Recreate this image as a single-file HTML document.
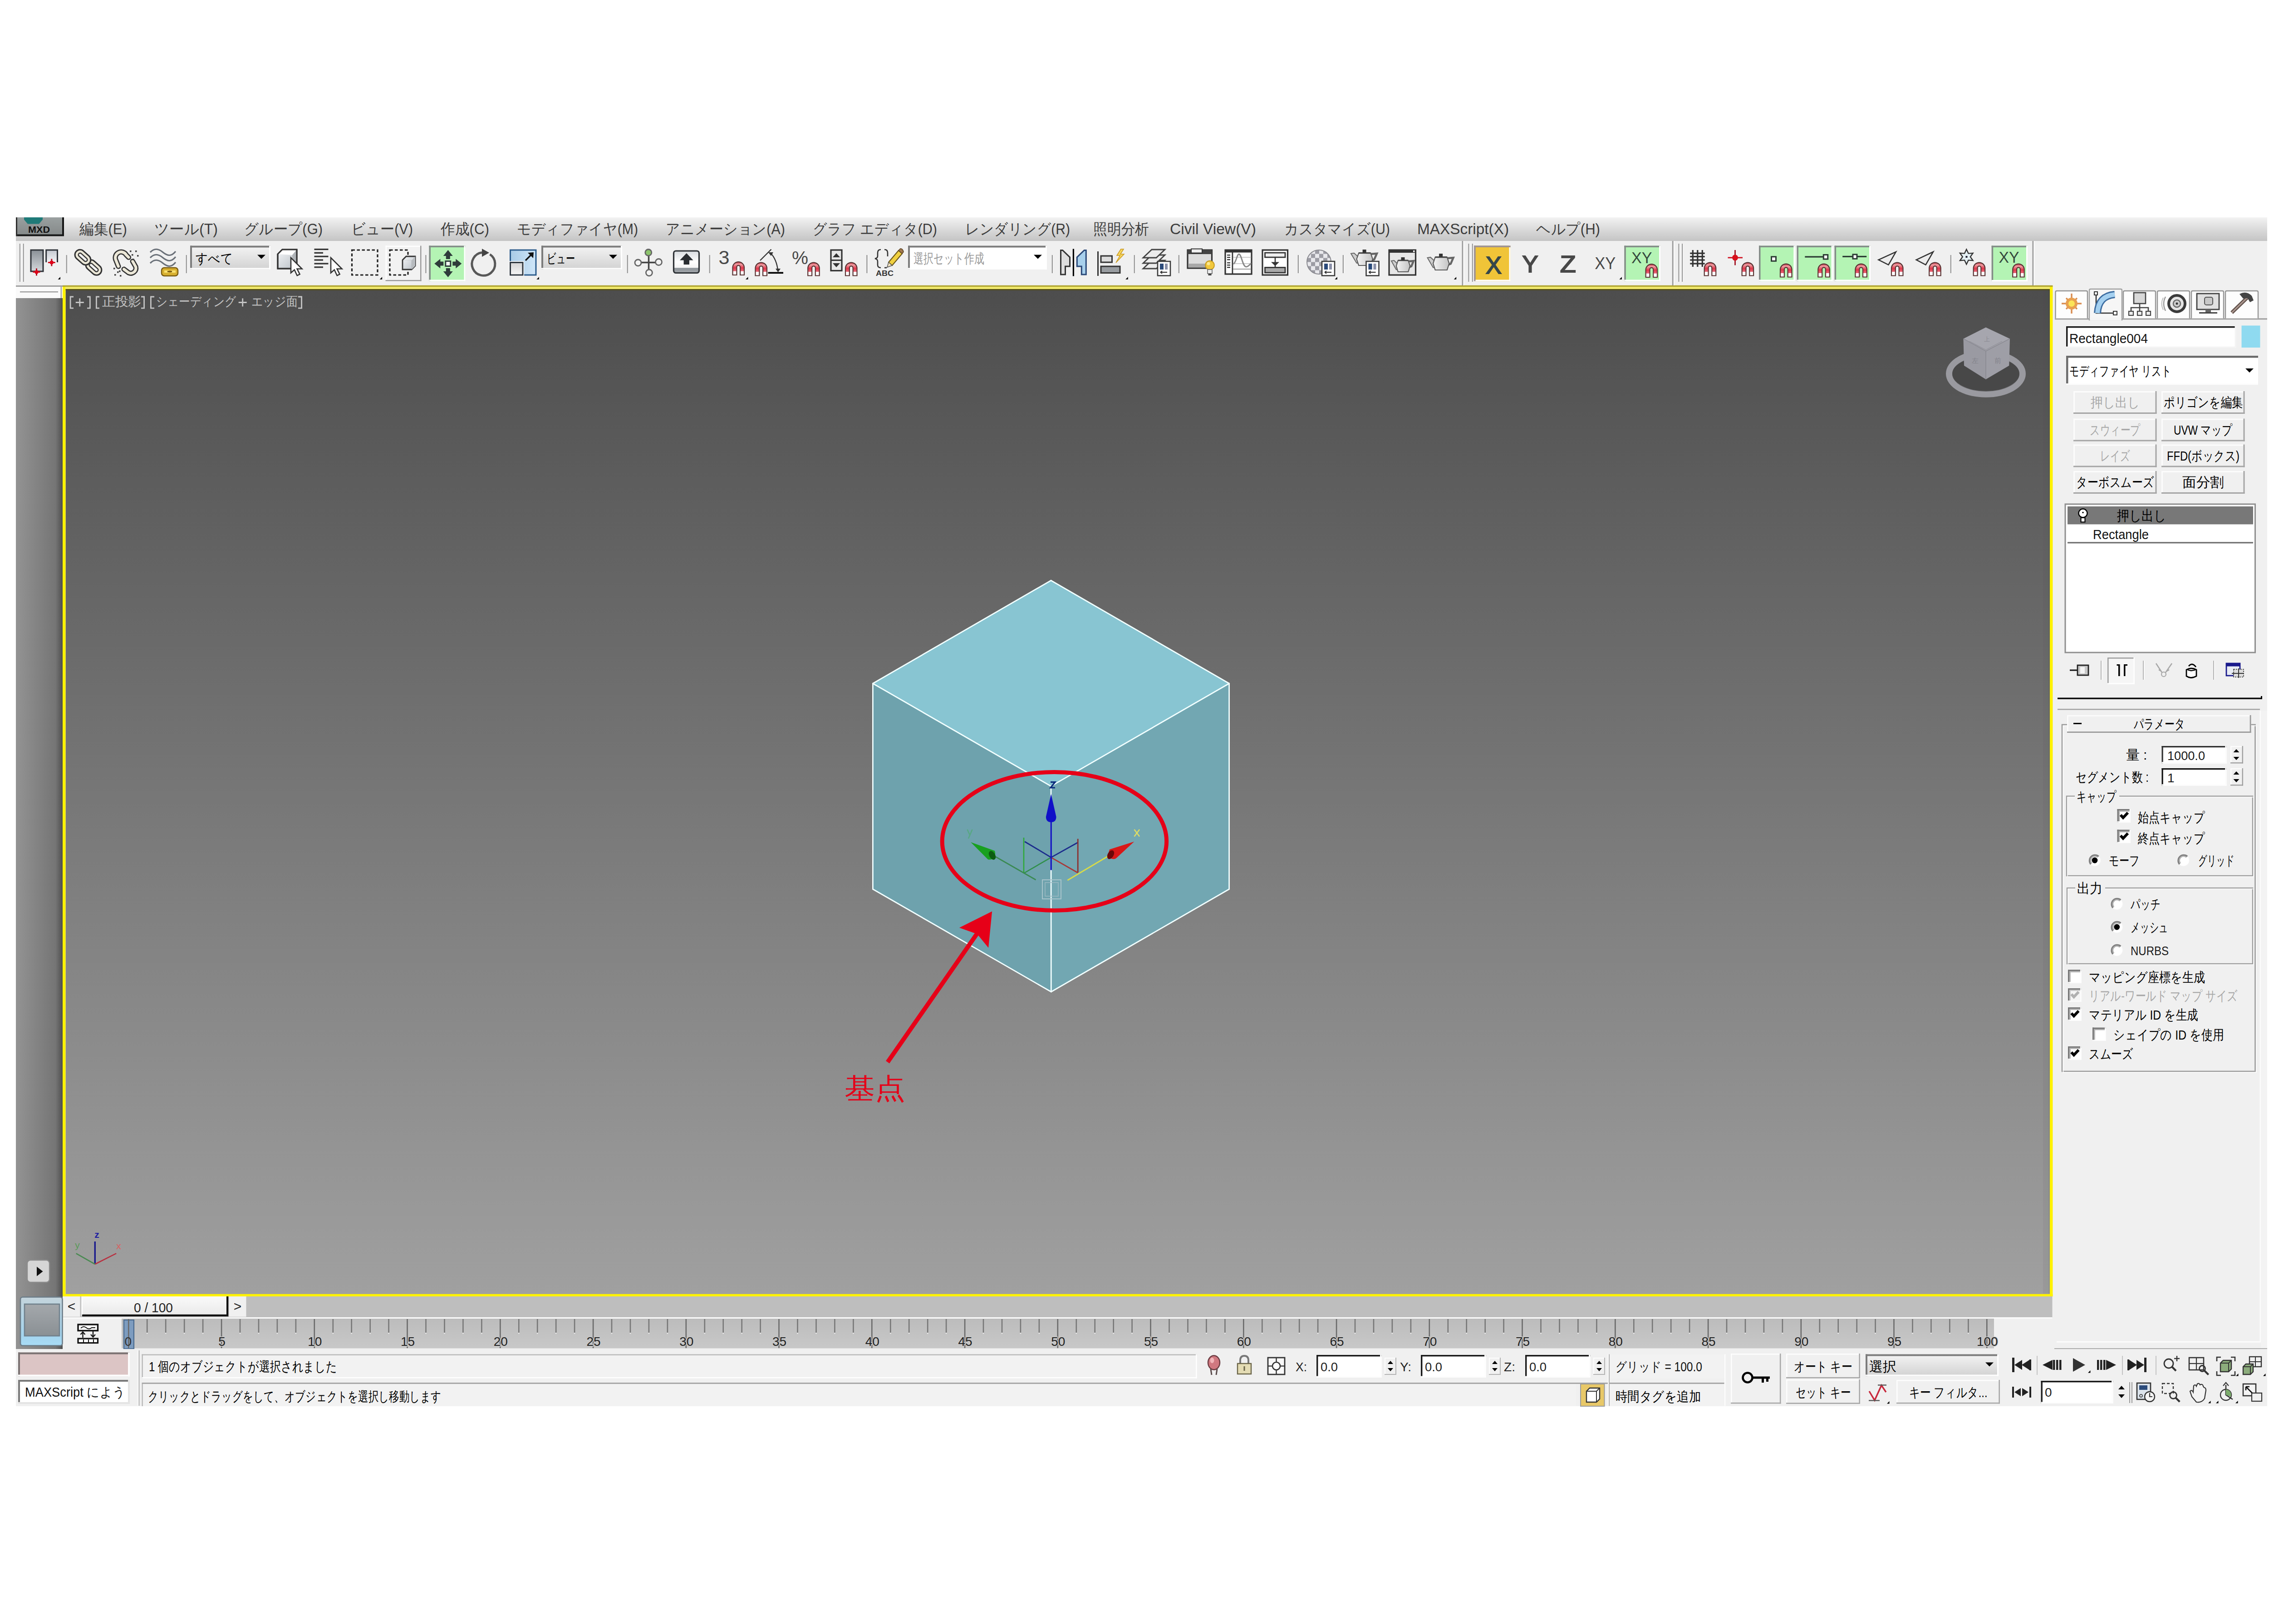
<!DOCTYPE html>
<html><head><meta charset="utf-8"><title>3ds Max</title>
<style>html,body{margin:0;padding:0;background:#fff;}body{width:5031px;height:3579px;overflow:hidden;font-family:"Liberation Sans",sans-serif;}svg{display:block;}</style></head>
<body>
<svg width="5031" height="3579" viewBox="0 0 5031 3579">
<defs>
<linearGradient id="gMenu" x1="0" y1="0" x2="0" y2="1"><stop offset="0" stop-color="#f3f3f3"/><stop offset="0.25" stop-color="#e6e6e6"/><stop offset="1" stop-color="#c4c4c4"/></linearGradient>
<linearGradient id="gView" x1="0" y1="0" x2="0" y2="1"><stop offset="0" stop-color="#4d4d4d"/><stop offset="1" stop-color="#a0a0a0"/></linearGradient>
<linearGradient id="gLeft" x1="0" y1="0" x2="1" y2="0"><stop offset="0" stop-color="#939393"/><stop offset="0.85" stop-color="#757575"/><stop offset="0.95" stop-color="#5c5c5c"/><stop offset="1" stop-color="#4e4e4e"/></linearGradient>
<linearGradient id="gDrop" x1="0" y1="0" x2="0" y2="1"><stop offset="0" stop-color="#f4f4f4"/><stop offset="1" stop-color="#d2d2d2"/></linearGradient>
<linearGradient id="gMxd" x1="0" y1="0" x2="0" y2="1"><stop offset="0" stop-color="#9aa0a0"/><stop offset="1" stop-color="#848888"/></linearGradient>
<linearGradient id="gI1" x1="0" y1="0" x2="0" y2="1"><stop offset="0" stop-color="#8a9096"/><stop offset="1" stop-color="#d4d8dc"/></linearGradient>
<linearGradient id="gI1b" x1="0" y1="0" x2="0" y2="1"><stop offset="0" stop-color="#c4c8d0"/><stop offset="1" stop-color="#f4f4f6"/></linearGradient>
<linearGradient id="gCube" x1="0" y1="0" x2="1" y2="1"><stop offset="0" stop-color="#f4f6f8"/><stop offset="1" stop-color="#b8bec4"/></linearGradient>
<linearGradient id="gSc" x1="0" y1="0" x2="1" y2="0"><stop offset="0" stop-color="#a8cbe6"/><stop offset="1" stop-color="#cfe6f8"/></linearGradient>
<linearGradient id="gSc2" x1="0" y1="0" x2="0" y2="1"><stop offset="0" stop-color="#d4d4d4"/><stop offset="1" stop-color="#f6f6f6"/></linearGradient>
<linearGradient id="gKb" x1="0" y1="0" x2="0" y2="1"><stop offset="0" stop-color="#d8dce0"/><stop offset="0.5" stop-color="#ffffff"/><stop offset="0.76" stop-color="#f4f4f4"/><stop offset="0.78" stop-color="#8c9298"/><stop offset="1" stop-color="#a4a8ac"/></linearGradient>
<linearGradient id="gm11" x1="0" y1="0" x2="0" y2="1"><stop offset="0" stop-color="#c8283c"/><stop offset="0.18" stop-color="#f0a0a4"/><stop offset="0.45" stop-color="#e0384c"/><stop offset="0.70" stop-color="#e86878"/><stop offset="0.72" stop-color="#ffffff"/><stop offset="1" stop-color="#ffffff"/></linearGradient>
<linearGradient id="gm12" x1="0" y1="0" x2="0" y2="1"><stop offset="0" stop-color="#c8283c"/><stop offset="0.18" stop-color="#f0a0a4"/><stop offset="0.45" stop-color="#e0384c"/><stop offset="0.70" stop-color="#e86878"/><stop offset="0.72" stop-color="#ffffff"/><stop offset="1" stop-color="#ffffff"/></linearGradient>
<linearGradient id="gm13" x1="0" y1="0" x2="0" y2="1"><stop offset="0" stop-color="#c8283c"/><stop offset="0.18" stop-color="#f0a0a4"/><stop offset="0.45" stop-color="#e0384c"/><stop offset="0.70" stop-color="#e86878"/><stop offset="0.72" stop-color="#ffffff"/><stop offset="1" stop-color="#ffffff"/></linearGradient>
<linearGradient id="gm14" x1="0" y1="0" x2="0" y2="1"><stop offset="0" stop-color="#c8283c"/><stop offset="0.18" stop-color="#f0a0a4"/><stop offset="0.45" stop-color="#e0384c"/><stop offset="0.70" stop-color="#e86878"/><stop offset="0.72" stop-color="#ffffff"/><stop offset="1" stop-color="#ffffff"/></linearGradient>
<pattern id="chk" x="2880" y="550.5" width="18" height="18" patternUnits="userSpaceOnUse"><rect width="18" height="18" fill="#e8e8ec"/><rect width="9" height="9" fill="#9c9ca4"/><rect x="9" y="9" width="9" height="9" fill="#9c9ca4"/></pattern>
<linearGradient id="gt16" x1="0" y1="0" x2="1" y2="0"><stop offset="0" stop-color="#f4f4f4"/><stop offset="1" stop-color="#c4c4c4"/></linearGradient>
<linearGradient id="gt17" x1="0" y1="0" x2="1" y2="0"><stop offset="0" stop-color="#f4f4f4"/><stop offset="1" stop-color="#c4c4c4"/></linearGradient>
<linearGradient id="gt18" x1="0" y1="0" x2="1" y2="0"><stop offset="0" stop-color="#f4f4f4"/><stop offset="1" stop-color="#c4c4c4"/></linearGradient>
<linearGradient id="gm19" x1="0" y1="0" x2="0" y2="1"><stop offset="0" stop-color="#c8283c"/><stop offset="0.18" stop-color="#f0a0a4"/><stop offset="0.45" stop-color="#e0384c"/><stop offset="0.70" stop-color="#e86878"/><stop offset="0.72" stop-color="#ffffff"/><stop offset="1" stop-color="#ffffff"/></linearGradient>
<linearGradient id="gm20" x1="0" y1="0" x2="0" y2="1"><stop offset="0" stop-color="#c8283c"/><stop offset="0.18" stop-color="#f0a0a4"/><stop offset="0.45" stop-color="#e0384c"/><stop offset="0.70" stop-color="#e86878"/><stop offset="0.72" stop-color="#ffffff"/><stop offset="1" stop-color="#ffffff"/></linearGradient>
<linearGradient id="gm21" x1="0" y1="0" x2="0" y2="1"><stop offset="0" stop-color="#c8283c"/><stop offset="0.18" stop-color="#f0a0a4"/><stop offset="0.45" stop-color="#e0384c"/><stop offset="0.70" stop-color="#e86878"/><stop offset="0.72" stop-color="#ffffff"/><stop offset="1" stop-color="#ffffff"/></linearGradient>
<linearGradient id="gm22" x1="0" y1="0" x2="0" y2="1"><stop offset="0" stop-color="#c8283c"/><stop offset="0.18" stop-color="#f0a0a4"/><stop offset="0.45" stop-color="#e0384c"/><stop offset="0.70" stop-color="#e86878"/><stop offset="0.72" stop-color="#ffffff"/><stop offset="1" stop-color="#ffffff"/></linearGradient>
<linearGradient id="gm23" x1="0" y1="0" x2="0" y2="1"><stop offset="0" stop-color="#c8283c"/><stop offset="0.18" stop-color="#f0a0a4"/><stop offset="0.45" stop-color="#e0384c"/><stop offset="0.70" stop-color="#e86878"/><stop offset="0.72" stop-color="#ffffff"/><stop offset="1" stop-color="#ffffff"/></linearGradient>
<linearGradient id="gm24" x1="0" y1="0" x2="0" y2="1"><stop offset="0" stop-color="#c8283c"/><stop offset="0.18" stop-color="#f0a0a4"/><stop offset="0.45" stop-color="#e0384c"/><stop offset="0.70" stop-color="#e86878"/><stop offset="0.72" stop-color="#ffffff"/><stop offset="1" stop-color="#ffffff"/></linearGradient>
<linearGradient id="gm25" x1="0" y1="0" x2="0" y2="1"><stop offset="0" stop-color="#c8283c"/><stop offset="0.18" stop-color="#f0a0a4"/><stop offset="0.45" stop-color="#e0384c"/><stop offset="0.70" stop-color="#e86878"/><stop offset="0.72" stop-color="#ffffff"/><stop offset="1" stop-color="#ffffff"/></linearGradient>
<linearGradient id="gm26" x1="0" y1="0" x2="0" y2="1"><stop offset="0" stop-color="#c8283c"/><stop offset="0.18" stop-color="#f0a0a4"/><stop offset="0.45" stop-color="#e0384c"/><stop offset="0.70" stop-color="#e86878"/><stop offset="0.72" stop-color="#ffffff"/><stop offset="1" stop-color="#ffffff"/></linearGradient>
<linearGradient id="gm27" x1="0" y1="0" x2="0" y2="1"><stop offset="0" stop-color="#c8283c"/><stop offset="0.18" stop-color="#f0a0a4"/><stop offset="0.45" stop-color="#e0384c"/><stop offset="0.70" stop-color="#e86878"/><stop offset="0.72" stop-color="#ffffff"/><stop offset="1" stop-color="#ffffff"/></linearGradient>
<linearGradient id="gm28" x1="0" y1="0" x2="0" y2="1"><stop offset="0" stop-color="#c8283c"/><stop offset="0.18" stop-color="#f0a0a4"/><stop offset="0.45" stop-color="#e0384c"/><stop offset="0.70" stop-color="#e86878"/><stop offset="0.72" stop-color="#ffffff"/><stop offset="1" stop-color="#ffffff"/></linearGradient>
<linearGradient id="gThumb" x1="0" y1="0" x2="0" y2="1"><stop offset="0" stop-color="#fafafa"/><stop offset="1" stop-color="#e8e8e8"/></linearGradient>
<linearGradient id="gTrack" x1="0" y1="0" x2="0" y2="1"><stop offset="0" stop-color="#bcbcbc"/><stop offset="1" stop-color="#c8c8c8"/></linearGradient>
<linearGradient id="gBlue" x1="0" y1="0" x2="0" y2="1"><stop offset="0" stop-color="#c4d4dc"/><stop offset="0.78" stop-color="#a4d4ee"/><stop offset="1" stop-color="#a8dcf6"/></linearGradient>
<linearGradient id="gInner" x1="0" y1="0" x2="0" y2="1"><stop offset="0" stop-color="#a4a8ac"/><stop offset="1" stop-color="#8a9094"/></linearGradient>
</defs>
<rect x="35.0" y="479.0" width="4961.0" height="2620.0" fill="#f0f0f0" />
<rect x="35.0" y="479.0" width="4961.0" height="52.0" fill="url(#gMenu)" />
<rect x="35.0" y="629.0" width="103.0" height="3.0" fill="#a0a0a0" />
<rect x="35.0" y="632.0" width="103.0" height="25.0" fill="#fafafa" />
<rect x="44.0" y="642.0" width="84.0" height="2.5" fill="#a0a0a0" />
<rect x="133.5" y="632.0" width="2.6" height="25.0" fill="#a6a6a6" />
<rect x="35.0" y="657.0" width="103.0" height="2316.0" fill="url(#gLeft)" />
<rect x="144.5" y="637.0" width="4372.5" height="2215.0" fill="url(#gView)" />
<rect x="138.0" y="630.0" width="6.5" height="2227.0" fill="#fff200" />
<rect x="4517.0" y="630.0" width="6.4" height="2227.0" fill="#fff200" />
<rect x="138.0" y="2851.8" width="4385.4" height="5.4" fill="#fff200" />
<rect x="138.0" y="628.8" width="4385.4" height="3.3" fill="#b0a432" />
<rect x="144.5" y="632.0" width="4372.5" height="5.0" fill="#f0e86c" />
<rect x="144.5" y="637.0" width="4372.5" height="2.6" fill="#585008" opacity="0.85"/>
<rect x="4502.0" y="639.0" width="5.0" height="2212.0" fill="#5a3c5c" opacity="0.07"/>
<rect x="4507.0" y="639.0" width="7.0" height="2212.0" fill="#3c5c3c" opacity="0.07"/>
<rect x="4514.0" y="639.0" width="3.0" height="2212.0" fill="#303030" opacity="0.12"/>
<rect x="35.0" y="479.0" width="106.0" height="41.0" fill="url(#gMxd)" />
<rect x="35.0" y="516.5" width="106.0" height="4.0" fill="#151515" />
<rect x="137.0" y="479.0" width="4.0" height="41.0" fill="#151515" />
<rect x="35.0" y="479.0" width="3.0" height="41.0" fill="#303030" />
<path d="M53,479 L94,479 L94,484 L86,493.5 L61,493.5 L53,484 Z" fill="#1f7a78" />
<text x="86.0" y="512.5" font-size="21" fill="#111" font-family="'Liberation Sans', sans-serif" text-anchor="middle" textLength="48.0" lengthAdjust="spacingAndGlyphs" font-weight="bold" >MXD</text>
<text x="175.0" y="515.5" font-size="32.5" fill="#3c3c3c" font-family="'Liberation Sans', sans-serif" textLength="105.0" lengthAdjust="spacingAndGlyphs" >編集(E)</text>
<text x="340.0" y="515.5" font-size="32.5" fill="#3c3c3c" font-family="'Liberation Sans', sans-serif" textLength="140.0" lengthAdjust="spacingAndGlyphs" >ツール(T)</text>
<text x="538.0" y="515.5" font-size="32.5" fill="#3c3c3c" font-family="'Liberation Sans', sans-serif" textLength="173.0" lengthAdjust="spacingAndGlyphs" >グループ(G)</text>
<text x="774.0" y="515.5" font-size="32.5" fill="#3c3c3c" font-family="'Liberation Sans', sans-serif" textLength="136.0" lengthAdjust="spacingAndGlyphs" >ビュー(V)</text>
<text x="971.0" y="515.5" font-size="32.5" fill="#3c3c3c" font-family="'Liberation Sans', sans-serif" textLength="107.0" lengthAdjust="spacingAndGlyphs" >作成(C)</text>
<text x="1139.0" y="515.5" font-size="32.5" fill="#3c3c3c" font-family="'Liberation Sans', sans-serif" textLength="267.0" lengthAdjust="spacingAndGlyphs" >モディファイヤ(M)</text>
<text x="1467.0" y="515.5" font-size="32.5" fill="#3c3c3c" font-family="'Liberation Sans', sans-serif" textLength="263.0" lengthAdjust="spacingAndGlyphs" >アニメーション(A)</text>
<text x="1791.0" y="515.5" font-size="32.5" fill="#3c3c3c" font-family="'Liberation Sans', sans-serif" textLength="274.0" lengthAdjust="spacingAndGlyphs" >グラフ エディタ(D)</text>
<text x="2127.0" y="515.5" font-size="32.5" fill="#3c3c3c" font-family="'Liberation Sans', sans-serif" textLength="231.0" lengthAdjust="spacingAndGlyphs" >レンダリング(R)</text>
<text x="2409.0" y="515.5" font-size="32.5" fill="#3c3c3c" font-family="'Liberation Sans', sans-serif" textLength="123.0" lengthAdjust="spacingAndGlyphs" >照明分析</text>
<text x="2578.0" y="515.5" font-size="32.5" fill="#3c3c3c" font-family="'Liberation Sans', sans-serif" textLength="190.0" lengthAdjust="spacingAndGlyphs" >Civil View(V)</text>
<text x="2830.0" y="515.5" font-size="32.5" fill="#3c3c3c" font-family="'Liberation Sans', sans-serif" textLength="233.0" lengthAdjust="spacingAndGlyphs" >カスタマイズ(U)</text>
<text x="3123.0" y="515.5" font-size="32.5" fill="#3c3c3c" font-family="'Liberation Sans', sans-serif" textLength="202.0" lengthAdjust="spacingAndGlyphs" >MAXScript(X)</text>
<text x="3385.0" y="515.5" font-size="32.5" fill="#3c3c3c" font-family="'Liberation Sans', sans-serif" textLength="141.0" lengthAdjust="spacingAndGlyphs" >ヘルプ(H)</text>
<rect x="42.8" y="537.0" width="2.5" height="84.0" fill="#9c9c9c" />
<rect x="45.3" y="537.0" width="1.5" height="84.0" fill="#fff" />
<rect x="50.8" y="537.0" width="2.5" height="84.0" fill="#9c9c9c" />
<rect x="53.3" y="537.0" width="1.5" height="84.0" fill="#fff" />
<rect x="68.0" y="551.0" width="27.0" height="47.0" fill="url(#gI1)" stroke="#2e3238" stroke-width="3" />
<path d="M101.7,578 L101.7,551 L126.5,551 L126.5,578" fill="url(#gI1b)" stroke="#2e3238" stroke-width="3" />
<line x1="72.5" y1="599.5" x2="88.5" y2="599.5" stroke="#d01020" stroke-width="3" />
<line x1="80.5" y1="591.5" x2="80.5" y2="607.5" stroke="#b01020" stroke-width="3" />
<rect x="77.0" y="596.0" width="7.0" height="7.0" fill="#e00018" />
<line x1="105.8" y1="578.5" x2="121.8" y2="578.5" stroke="#d01020" stroke-width="3" />
<line x1="113.8" y1="570.5" x2="113.8" y2="586.5" stroke="#b01020" stroke-width="3" />
<rect x="110.3" y="575.0" width="7.0" height="7.0" fill="#e00018" />
<path d="M133.0,610.3 L133.0,615.8 L127.5,615.8 Z" fill="#000" />
<rect x="145.7" y="562.0" width="2.6" height="40.0" fill="#9a9a9a" />
<rect x="148.3" y="562.0" width="1.5" height="40.0" fill="#fbfbfb" />
<g transform="translate(206.5,589.5) rotate(42)">
<rect x="-19.5" y="-11.2" width="39" height="22.5" rx="11.2" fill="#ece8d8" stroke="#333" stroke-width="3"/>
<rect x="-12.0" y="-3.8" width="24" height="7.5" rx="3.8" fill="#f0f0f0" stroke="#333" stroke-width="2.4"/>
</g>
<g transform="translate(182.5,567.0) rotate(42)">
<rect x="-19.5" y="-11.2" width="39" height="22.5" rx="11.2" fill="#ece8d8" stroke="#333" stroke-width="3"/>
<rect x="-12.0" y="-3.8" width="24" height="7.5" rx="3.8" fill="#f0f0f0" stroke="#333" stroke-width="2.4"/>
</g>
<g fill="none" stroke-linecap="round" transform="translate(276.8,578.3) scale(0.87) translate(-276.3,-574.8)">
<path d="M258,585 L252,570 A14,14 0 0 1 278,556 L284,562" fill="none" stroke="#333" stroke-width="13" />
<path d="M258,585 L252,570 A14,14 0 0 1 278,556 L284,562" fill="none" stroke="#ece8d8" stroke-width="7" />
<path d="M272,592 L284,601 A13,13 0 0 0 302,586 L294,572" fill="none" stroke="#333" stroke-width="13" />
<path d="M272,592 L284,601 A13,13 0 0 0 302,586 L294,572" fill="none" stroke="#ece8d8" stroke-width="7" />
</g>
<rect x="286.0" y="552.0" width="3.5" height="3.5" fill="#444" />
<rect x="298.0" y="552.0" width="3.5" height="3.5" fill="#444" />
<rect x="290.0" y="560.0" width="3.5" height="3.5" fill="#444" />
<rect x="302.0" y="562.0" width="3.5" height="3.5" fill="#444" />
<rect x="292.0" y="570.0" width="3.5" height="3.5" fill="#444" />
<rect x="250.0" y="590.0" width="3.5" height="3.5" fill="#444" />
<rect x="262.0" y="596.0" width="3.5" height="3.5" fill="#444" />
<rect x="252.0" y="604.0" width="3.5" height="3.5" fill="#444" />
<rect x="264.0" y="606.0" width="3.5" height="3.5" fill="#444" />
<rect x="258.0" y="598.0" width="3.5" height="3.5" fill="#444" />
<path d="M331,556 C340,547 348,547 359,556 S378,565 387,554" fill="none" stroke="#6a7078" stroke-width="3.2" />
<path d="M331,568 C340,559 348,559 359,568 S378,577 387,566" fill="none" stroke="#6a7078" stroke-width="3.2" />
<path d="M331,580 C340,571 348,571 359,580 S378,589 387,578" fill="none" stroke="#6a7078" stroke-width="3.2" />
<rect x="356.0" y="590.0" width="36.0" height="18.0" fill="#d8b030" stroke="#7a5c10" stroke-width="2.5" rx="6"/>
<rect x="362.0" y="596.0" width="10.0" height="5.0" fill="#f8e070" />
<rect x="377.0" y="596.0" width="10.0" height="5.0" fill="#f8e070" />
<rect x="369.0" y="597.0" width="10.0" height="3.0" fill="#7a5c10" />
<rect x="409.7" y="562.0" width="2.6" height="40.0" fill="#9a9a9a" />
<rect x="412.3" y="562.0" width="1.5" height="40.0" fill="#fbfbfb" />
<rect x="419.0" y="541.5" width="177.0" height="52.0" fill="url(#gDrop)" />
<rect x="419.0" y="541.5" width="177.0" height="4.0" fill="#7c7c7c" />
<rect x="419.0" y="541.5" width="4.0" height="52.0" fill="#7c7c7c" />
<rect x="419.0" y="590.5" width="177.0" height="3.0" fill="#fff" />
<rect x="593.0" y="541.5" width="3.0" height="52.0" fill="#fff" />
<text x="431.0" y="580.0" font-size="30" fill="#000" font-family="'Liberation Sans', sans-serif" textLength="82.0" lengthAdjust="spacingAndGlyphs" >すべて</text>
<path d="M567.0,561.5 L585.0,561.5 L576.0,570.5 Z" fill="#000" />
<path d="M612,560 L622,550 L654,550 L654,582 L644,592 L612,592 Z" fill="url(#gCube)" stroke="#333" stroke-width="3" />
<path d="M622,550 L654,550 L654,582 L644,592 L644,562 L612,560 Z" fill="#fff" stroke="none" stroke-width="1" />
<path d="M644,562 L654,550 L654,582 L644,592 Z" fill="#b0b4b8" stroke="none" stroke-width="1" />
<path d="M612,560 L622,550 L654,550 L654,582 L644,592 L612,592 Z" fill="none" stroke="#333" stroke-width="3" />
<path d="M641.0,568.0 L641.0,601.3 L648.8,594.5 L654.7,607.2 L660.6,604.3 L654.7,592.5 L665.5,592.5 Z" fill="#fff" stroke="#333" stroke-width="2.6" stroke-linejoin="miter"/>
<rect x="692.5" y="547.9" width="31.0" height="3.2" fill="#333" />
<rect x="692.5" y="555.7" width="19.5" height="3.2" fill="#333" />
<rect x="692.5" y="563.6" width="31.0" height="3.2" fill="#333" />
<rect x="692.5" y="571.4" width="19.5" height="3.2" fill="#333" />
<rect x="692.5" y="579.4" width="31.0" height="3.2" fill="#333" />
<rect x="692.5" y="587.2" width="19.5" height="3.2" fill="#333" />
<path d="M729.0,568.0 L729.0,601.3 L736.8,594.5 L742.7,607.2 L748.6,604.3 L742.7,592.5 L753.5,592.5 Z" fill="#fff" stroke="#333" stroke-width="2.6" stroke-linejoin="miter"/>
<rect x="775.5" y="551.0" width="56.5" height="55.0" fill="none" stroke="#222" stroke-width="3.2" stroke-dasharray="6.5,4.5"/>
<path d="M842.2,610.3 L842.2,615.8 L836.7,615.8 Z" fill="#000" />
<rect x="849.5" y="541.5" width="79.0" height="78.0" fill="#f2f2f2" />
<rect x="849.5" y="541.5" width="79.0" height="2.5" fill="#fff" />
<rect x="849.5" y="541.5" width="2.5" height="78.0" fill="#fff" />
<rect x="849.5" y="617.0" width="79.0" height="2.5" fill="#9a9a9a" />
<rect x="926.0" y="541.5" width="2.5" height="78.0" fill="#9a9a9a" />
<rect x="859.0" y="551.0" width="40.0" height="55.0" fill="none" stroke="#222" stroke-width="3.2" stroke-dasharray="6.5,4.5"/>
<path d="M887,573 L895,565 L915,565 L915,586 L907,594 L887,594 Z" fill="url(#gCube)" stroke="#333" stroke-width="2.8" />
<path d="M907,574 L915,565 L915,586 L907,594 Z" fill="#b8bcc0" stroke="none" stroke-width="1" />
<path d="M887,573 L907,574 L907,594" fill="none" stroke="#333" stroke-width="0.1" />
<rect x="937.2" y="562.0" width="2.6" height="40.0" fill="#9a9a9a" />
<rect x="939.8" y="562.0" width="1.5" height="40.0" fill="#fbfbfb" />
<rect x="945.5" y="541.5" width="80.0" height="78.0" fill="#b4f4b4" />
<rect x="945.5" y="541.5" width="80.0" height="3.5" fill="#848c88" />
<rect x="945.5" y="541.5" width="3.5" height="78.0" fill="#848c88" />
<rect x="945.5" y="616.5" width="80.0" height="3.0" fill="#fff" />
<rect x="1022.5" y="541.5" width="3.0" height="78.0" fill="#fff" />
<g transform="translate(987.3,581) rotate(0)"><path d="M10,-4.5 L17,-4.5 L17,-10.5 L30,0 L17,10.5 L17,4.5 L10,4.5 Z" fill="#2e3c3a"/></g>
<g transform="translate(987.3,581) rotate(90)"><path d="M10,-4.5 L17,-4.5 L17,-10.5 L30,0 L17,10.5 L17,4.5 L10,4.5 Z" fill="#2e3c3a"/></g>
<g transform="translate(987.3,581) rotate(180)"><path d="M10,-4.5 L17,-4.5 L17,-10.5 L30,0 L17,10.5 L17,4.5 L10,4.5 Z" fill="#2e3c3a"/></g>
<g transform="translate(987.3,581) rotate(270)"><path d="M10,-4.5 L17,-4.5 L17,-10.5 L30,0 L17,10.5 L17,4.5 L10,4.5 Z" fill="#2e3c3a"/></g>
<rect x="981.8" y="575.5" width="11.0" height="11.0" fill="#f4fff4" stroke="#2e3c3a" stroke-width="3" />
<path d="M1079.5,560.5 A25.5,25.5 0 1 1 1062,556.5" fill="none" stroke="#585858" stroke-width="5" />
<path d="M1062,548 L1078,557 L1062,566 Z" fill="#444" />
<rect x="1124.5" y="551.0" width="56.5" height="55.0" fill="url(#gSc)" stroke="#2c5c8c" stroke-width="3" />
<rect x="1122.0" y="575.5" width="33.0" height="33.0" fill="#fff" />
<rect x="1124.5" y="578.5" width="27.5" height="27.5" fill="url(#gSc2)" stroke="#303840" stroke-width="3" />
<line x1="1158.0" y1="574.0" x2="1172.0" y2="560.0" stroke="#111" stroke-width="3.2" />
<path d="M1163,557 L1176,556 L1175,569 Z" fill="#111" />
<path d="M1187.8,610.3 L1187.8,615.8 L1182.3,615.8 Z" fill="#000" />
<rect x="1193.0" y="541.5" width="178.0" height="52.0" fill="url(#gDrop)" />
<rect x="1193.0" y="541.5" width="178.0" height="4.0" fill="#7c7c7c" />
<rect x="1193.0" y="541.5" width="4.0" height="52.0" fill="#7c7c7c" />
<rect x="1193.0" y="590.5" width="178.0" height="3.0" fill="#fff" />
<rect x="1368.0" y="541.5" width="3.0" height="52.0" fill="#fff" />
<text x="1205.0" y="580.0" font-size="30" fill="#000" font-family="'Liberation Sans', sans-serif" textLength="62.0" lengthAdjust="spacingAndGlyphs" >ビュー</text>
<path d="M1342.0,561.5 L1360.0,561.5 L1351.0,570.5 Z" fill="#000" />
<rect x="1381.7" y="562.0" width="2.6" height="40.0" fill="#9a9a9a" />
<rect x="1384.3" y="562.0" width="1.5" height="40.0" fill="#fbfbfb" />
<line x1="1406.0" y1="578.5" x2="1452.0" y2="578.5" stroke="#444" stroke-width="3.5" />
<line x1="1429.5" y1="556.0" x2="1429.5" y2="601.0" stroke="#444" stroke-width="3.5" />
<circle cx="1428.8" cy="556.5" r="7" fill="#8cc46c" stroke="#666" stroke-width="2.8"/>
<circle cx="1406" cy="579" r="7" fill="#f4f4f4" stroke="#666" stroke-width="2.8"/>
<circle cx="1451.5" cy="577.5" r="7" fill="#f4f4f4" stroke="#666" stroke-width="2.8"/>
<circle cx="1430.4" cy="601" r="7" fill="#f4f4f4" stroke="#666" stroke-width="2.8"/>
<rect x="1484.5" y="553.0" width="56.0" height="48.5" fill="url(#gKb)" stroke="#2e3236" stroke-width="3.2" rx="5"/>
<path d="M1512.8,558 L1527.5,573.5 L1519,573.5 L1519,583 L1506.6,583 L1506.6,573.5 L1498,573.5 Z" fill="#2a2e32" />
<rect x="1562.7" y="562.0" width="2.6" height="40.0" fill="#9a9a9a" />
<rect x="1565.3" y="562.0" width="1.5" height="40.0" fill="#fbfbfb" />
<text x="1583.5" y="582.0" font-size="43" fill="#484848" font-family="'Liberation Sans', sans-serif" textLength="24.0" lengthAdjust="spacingAndGlyphs" >3</text>
<path d="M1614.5,606.0 L1614.5,588.8 A12.8,12.8 0 0 1 1640.0,588.8 L1640.0,606.0 L1631.1,606.0 L1631.1,588.8 A3.8,3.8 0 0 0 1623.4,588.8 L1623.4,606.0 Z" fill="url(#gm11)" stroke="#5a3434" stroke-width="2.2" />
<path d="M1648.5,610.3 L1648.5,615.8 L1643.0,615.8 Z" fill="#000" />
<path d="M1664.5,607.5 L1664.5,590.2 A12.8,12.8 0 0 1 1690.0,590.2 L1690.0,607.5 L1681.1,607.5 L1681.1,590.2 A3.8,3.8 0 0 0 1673.4,590.2 L1673.4,607.5 Z" fill="url(#gm12)" stroke="#5a3434" stroke-width="2.2" />
<line x1="1675.0" y1="574.0" x2="1699.5" y2="549.5" stroke="#333" stroke-width="2.4" />
<path d="M1697.5,557 Q1712,572 1714.3,598" fill="none" stroke="#333" stroke-width="2.4" />
<path d="M1693,556 L1704,556 L1699,564 Z" fill="#333" />
<path d="M1709,592 L1720,592 L1714.5,600 Z" fill="#333" />
<rect x="1692.5" y="599.5" width="33.5" height="3.6" fill="#000" />
<text x="1745.0" y="582.0" font-size="41" fill="#484848" font-family="'Liberation Sans', sans-serif" textLength="36.0" lengthAdjust="spacingAndGlyphs" >%</text>
<path d="M1780.2,607.5 L1780.2,590.2 A12.8,12.8 0 0 1 1805.7,590.2 L1805.7,607.5 L1796.8,607.5 L1796.8,590.2 A3.8,3.8 0 0 0 1789.1,590.2 L1789.1,607.5 Z" fill="url(#gm13)" stroke="#5a3434" stroke-width="2.2" />
<rect x="1831.0" y="551.0" width="24.0" height="45.5" fill="#e8e8e8" stroke="#333" stroke-width="3.2" />
<line x1="1831.0" y1="573.5" x2="1855.0" y2="573.5" stroke="#333" stroke-width="3" />
<path d="M1835,567 L1851,567 L1843,558 Z" fill="#333" />
<path d="M1835,580 L1851,580 L1843,589 Z" fill="#333" />
<path d="M1863.0,607.5 L1863.0,590.2 A12.8,12.8 0 0 1 1888.5,590.2 L1888.5,607.5 L1879.6,607.5 L1879.6,590.2 A3.8,3.8 0 0 0 1871.9,590.2 L1871.9,607.5 Z" fill="url(#gm14)" stroke="#5a3434" stroke-width="2.2" />
<rect x="1909.2" y="562.0" width="2.6" height="40.0" fill="#9a9a9a" />
<rect x="1911.8" y="562.0" width="1.5" height="40.0" fill="#fbfbfb" />
<path d="M1941,550 Q1934,550 1934,557 L1934,564 Q1934,569 1928,570 Q1934,571 1934,576 L1934,584 Q1934,590 1941,590" fill="none" stroke="#333" stroke-width="2.6" />
<path d="M1949,550 Q1956,550 1956,557 L1956,565" fill="none" stroke="#333" stroke-width="2.6" />
<path d="M1949,590 L1954,590" fill="none" stroke="#333" stroke-width="2.6" />
<path d="M1958,578 L1980,552 L1988,559 L1966,585 Z" fill="#f0d040" stroke="#6a5418" stroke-width="2" />
<path d="M1980,552 L1984,548 Q1989,547 1991,555 L1988,559 Z" fill="#a07850" stroke="#5a4020" stroke-width="1.5" />
<path d="M1958,578 L1955,589 L1966,585 Z" fill="#f4e4c0" stroke="#555" stroke-width="1.5" />
<text x="1930.0" y="607.5" font-size="16" fill="#333" font-family="'Liberation Sans', sans-serif" textLength="39.0" lengthAdjust="spacingAndGlyphs" font-weight="bold" >ABC</text>
<rect x="2001.0" y="541.5" width="306.0" height="52.0" fill="#fff" />
<rect x="2001.0" y="541.5" width="306.0" height="4.0" fill="#7c7c7c" />
<rect x="2001.0" y="541.5" width="4.0" height="52.0" fill="#7c7c7c" />
<rect x="2001.0" y="590.5" width="306.0" height="3.0" fill="#fff" />
<rect x="2304.0" y="541.5" width="3.0" height="52.0" fill="#fff" />
<text x="2013.0" y="580.0" font-size="30" fill="#9a9a9a" font-family="'Liberation Sans', sans-serif" textLength="156.0" lengthAdjust="spacingAndGlyphs" >選択セット作成</text>
<path d="M2278.0,561.5 L2296.0,561.5 L2287.0,570.5 Z" fill="#000" />
<rect x="2317.7" y="562.0" width="2.6" height="40.0" fill="#9a9a9a" />
<rect x="2320.3" y="562.0" width="1.5" height="40.0" fill="#fbfbfb" />
<path d="M2337.5,551.5 L2341.5,551.5 L2357.5,567 L2357.5,587 L2347.5,587 L2347.5,605 L2337.5,605 Z" fill="#dedede" stroke="#333" stroke-width="3" />
<rect x="2363.8" y="548.5" width="3.2" height="60.0" fill="#000" />
<path d="M2393.3,551.5 L2389.3,551.5 L2373.3,567 L2373.3,587 L2383.3,587 L2383.3,605 L2393.3,605 Z" fill="#a8d0ec" stroke="#2a4878" stroke-width="3" />
<rect x="2418.0" y="554.0" width="3.0" height="54.0" fill="#333" />
<rect x="2426.0" y="564.0" width="24.5" height="14.0" fill="#dcdcdc" stroke="#333" stroke-width="3" />
<rect x="2426.0" y="587.0" width="42.0" height="14.5" fill="#989ca0" stroke="#333" stroke-width="3" />
<path d="M2470,549 L2461,563 L2468,563 L2459,579 L2477,560 L2469,560 L2476,549 Z" fill="#f8d860" stroke="#c89820" stroke-width="1.5" />
<path d="M2485.7,610.3 L2485.7,615.8 L2480.2,615.8 Z" fill="#000" />
<rect x="2498.7" y="562.0" width="2.6" height="40.0" fill="#9a9a9a" />
<rect x="2501.3" y="562.0" width="1.5" height="40.0" fill="#fbfbfb" />
<path d="M2519,592 L2538,574 L2567,574 L2548,592 Z" fill="#ececec" stroke="#444" stroke-width="2.8" />
<path d="M2519,580 L2538,562 L2567,562 L2548,580 Z" fill="#ececec" stroke="#444" stroke-width="2.8" />
<path d="M2519,568 L2538,550 L2567,550 L2548,568 Z" fill="#ececec" stroke="#444" stroke-width="2.8" />
<rect x="2551.0" y="576.0" width="28.0" height="31.5" fill="#fdfdfd" stroke="#3a3a3a" stroke-width="2.6" />
<rect x="2556.0" y="581.0" width="8.0" height="13.0" fill="#2b4a7a" />
<rect x="2567.0" y="581.0" width="6.0" height="13.0" fill="#8a90a8" />
<line x1="2557.0" y1="600.0" x2="2572.0" y2="600.0" stroke="#333" stroke-width="2.2" />
<line x1="2557.0" y1="600.0" x2="2561.0" y2="597.0" stroke="#333" stroke-width="1.8" />
<line x1="2557.0" y1="600.0" x2="2561.0" y2="603.0" stroke="#333" stroke-width="1.8" />
<rect x="2596.7" y="562.0" width="2.6" height="40.0" fill="#9a9a9a" />
<rect x="2599.3" y="562.0" width="1.5" height="40.0" fill="#fbfbfb" />
<rect x="2617.0" y="551.0" width="53.5" height="40.0" fill="#dcdcdc" stroke="#333" stroke-width="3.2" />
<rect x="2617.0" y="551.0" width="53.5" height="9.0" fill="#444" />
<rect x="2625.0" y="548.5" width="24.0" height="9.0" fill="#eee" stroke="#333" stroke-width="2" />
<rect x="2618.5" y="581.0" width="50.5" height="8.5" fill="#a8a8a8" />
<circle cx="2666" cy="584.5" r="9.8" fill="#f2c83c" stroke="#c89c20" stroke-width="2"/>
<circle cx="2663" cy="581" r="3.5" fill="#fbe890"/>
<rect x="2661.0" y="594.0" width="10.0" height="9.0" fill="#eee" stroke="#666" stroke-width="1.6" />
<rect x="2662.5" y="603.0" width="7.0" height="4.0" fill="#444" />
<rect x="2700.0" y="551.0" width="58.0" height="53.0" fill="#fff" stroke="#333" stroke-width="3.2" />
<rect x="2700.0" y="551.0" width="58.0" height="5.5" fill="#333" />
<rect x="2714.5" y="551.0" width="2.8" height="53.0" fill="#333" />
<rect x="2704.0" y="561.0" width="7.0" height="2.4" fill="#333" />
<rect x="2704.0" y="566.0" width="7.0" height="2.4" fill="#333" />
<rect x="2704.0" y="571.0" width="7.0" height="2.4" fill="#333" />
<rect x="2704.0" y="578.0" width="7.0" height="2.4" fill="#333" />
<rect x="2704.0" y="583.0" width="7.0" height="2.4" fill="#333" />
<rect x="2704.0" y="588.0" width="7.0" height="2.4" fill="#333" />
<line x1="2717.0" y1="567.0" x2="2757.0" y2="567.0" stroke="#bbb" stroke-width="1.6" />
<line x1="2717.0" y1="581.0" x2="2757.0" y2="581.0" stroke="#bbb" stroke-width="1.6" />
<line x1="2717.0" y1="593.0" x2="2757.0" y2="593.0" stroke="#999" stroke-width="1.8" />
<path d="M2718,582 C2724,578 2726,560 2730,560 C2736,560 2738,588 2746,588 C2751,588 2753,584 2757,580" fill="none" stroke="#888" stroke-width="2.8" />
<rect x="2782.0" y="551.0" width="55.5" height="55.0" fill="#fff" stroke="#333" stroke-width="3.2" />
<rect x="2787.5" y="557.0" width="44.5" height="10.0" fill="#eee" stroke="#333" stroke-width="2.8" />
<rect x="2787.5" y="589.5" width="44.5" height="11.5" fill="#a8a8a8" stroke="#333" stroke-width="2.8" />
<line x1="2810.0" y1="567.0" x2="2810.0" y2="589.0" stroke="#333" stroke-width="2.6" />
<path d="M2801,577.5 L2819,577.5 L2810,586 Z" fill="#333" />
<rect x="2859.7" y="562.0" width="2.6" height="40.0" fill="#9a9a9a" />
<rect x="2862.3" y="562.0" width="1.5" height="40.0" fill="#fbfbfb" />
<circle cx="2906.5" cy="577.5" r="26.5" fill="url(#chk)" stroke="#8a8a90" stroke-width="2"/>
<rect x="2913.0" y="576.0" width="28.0" height="31.5" fill="#fdfdfd" stroke="#3a3a3a" stroke-width="2.6" />
<rect x="2918.0" y="581.0" width="8.0" height="13.0" fill="#2b4a7a" />
<rect x="2929.0" y="581.0" width="6.0" height="13.0" fill="#8a90a8" />
<line x1="2919.0" y1="600.0" x2="2934.0" y2="600.0" stroke="#333" stroke-width="2.2" />
<line x1="2919.0" y1="600.0" x2="2923.0" y2="597.0" stroke="#333" stroke-width="1.8" />
<line x1="2919.0" y1="600.0" x2="2923.0" y2="603.0" stroke="#333" stroke-width="1.8" />
<path d="M2946.8,610.3 L2946.8,615.8 L2941.3,615.8 Z" fill="#000" />
<rect x="2958.7" y="562.0" width="2.6" height="40.0" fill="#9a9a9a" />
<rect x="2961.3" y="562.0" width="1.5" height="40.0" fill="#fbfbfb" />
<path d="M2977.0,558.8 L2983.8,557.7 L2996.4,569.2 L2994.1,579.8 L2989.5,579.8 Z" fill="#cfcfcf" stroke="#666" stroke-width="2" />
<path d="M3021.5,559.8 L3034.0,558.8 L3028.3,571.7 L3021.5,574.5" fill="none" stroke="#666" stroke-width="4.5" />
<path d="M2994.1,557.7 L3020.3,557.7 L3024.9,571.0 L3020.3,585.0 L2994.1,585.0 L2989.5,571.0 Z" fill="url(#gt16)" stroke="#5a5a5a" stroke-width="2.2" />
<rect x="2994.1" y="556.0" width="26.2" height="3.1" fill="#444" />
<rect x="3002.6" y="550.0" width="8.0" height="7.0" fill="#333" />
<rect x="3010.5" y="576.0" width="28.0" height="31.5" fill="#fdfdfd" stroke="#3a3a3a" stroke-width="2.6" />
<rect x="3015.5" y="581.0" width="8.0" height="13.0" fill="#2b4a7a" />
<rect x="3026.5" y="581.0" width="6.0" height="13.0" fill="#8a90a8" />
<line x1="3016.5" y1="600.0" x2="3031.5" y2="600.0" stroke="#333" stroke-width="2.2" />
<line x1="3016.5" y1="600.0" x2="3020.5" y2="597.0" stroke="#333" stroke-width="1.8" />
<line x1="3016.5" y1="600.0" x2="3020.5" y2="603.0" stroke="#333" stroke-width="1.8" />
<rect x="3061.0" y="551.0" width="58.5" height="55.0" fill="#e6e6e6" stroke="#333" stroke-width="3.2" />
<rect x="3061.0" y="551.0" width="58.5" height="6.0" fill="#333" />
<rect x="3114.0" y="552.0" width="3.5" height="3.5" fill="#fff" />
<path d="M3066.0,575.0 L3071.9,574.0 L3082.7,584.6 L3080.7,594.2 L3076.8,594.2 Z" fill="#cfcfcf" stroke="#666" stroke-width="2" />
<path d="M3104.2,576.0 L3115.0,575.0 L3110.1,586.8 L3104.2,589.4" fill="none" stroke="#666" stroke-width="4.5" />
<path d="M3080.7,574.0 L3103.2,574.0 L3107.2,586.2 L3103.2,599.0 L3080.7,599.0 L3076.8,586.2 Z" fill="url(#gt17)" stroke="#5a5a5a" stroke-width="2.2" />
<rect x="3080.7" y="572.4" width="22.5" height="2.9" fill="#444" />
<rect x="3087.5" y="567.0" width="8.0" height="6.4" fill="#333" />
<path d="M3145.5,568.0 L3152.3,566.9 L3164.9,578.8 L3162.6,589.6 L3158.0,589.6 Z" fill="#cfcfcf" stroke="#666" stroke-width="2" />
<path d="M3190.0,569.1 L3202.5,568.0 L3196.8,581.3 L3190.0,584.2" fill="none" stroke="#666" stroke-width="4.5" />
<path d="M3162.6,566.9 L3188.8,566.9 L3193.4,580.6 L3188.8,595.0 L3162.6,595.0 L3158.0,580.6 Z" fill="url(#gt18)" stroke="#5a5a5a" stroke-width="2.2" />
<rect x="3162.6" y="565.1" width="26.2" height="3.2" fill="#444" />
<rect x="3171.1" y="559.0" width="8.0" height="7.2" fill="#333" />
<path d="M3209.2,610.3 L3209.2,615.8 L3203.7,615.8 Z" fill="#000" />
<rect x="3221.5" y="531.0" width="3.0" height="98.0" fill="#9a9a9a" />
<rect x="3224.5" y="531.0" width="2.0" height="98.0" fill="#fdfdfd" />
<rect x="3235.3" y="537.0" width="2.5" height="84.0" fill="#9c9c9c" />
<rect x="3237.8" y="537.0" width="1.5" height="84.0" fill="#fff" />
<rect x="3243.8" y="537.0" width="2.5" height="84.0" fill="#9c9c9c" />
<rect x="3246.3" y="537.0" width="1.5" height="84.0" fill="#fff" />
<rect x="3248.0" y="541.5" width="80.5" height="78.0" fill="#f0c438" />
<rect x="3248.0" y="541.5" width="80.5" height="3.5" fill="#848c88" />
<rect x="3248.0" y="541.5" width="3.5" height="78.0" fill="#848c88" />
<rect x="3248.0" y="616.5" width="80.5" height="3.0" fill="#fff" />
<rect x="3325.5" y="541.5" width="3.0" height="78.0" fill="#fff" />
<rect x="3248.0" y="541.5" width="80.5" height="3.5" fill="#a09494" />
<rect x="3248.0" y="541.5" width="3.5" height="78.0" fill="#a09494" />
<text x="3291.5" y="602.8" font-size="54" fill="#37474a" font-family="'Liberation Sans', sans-serif" text-anchor="middle" textLength="35.0" lengthAdjust="spacingAndGlyphs" stroke="#37474a" stroke-width="2.2">X</text>
<text x="3372.0" y="599.5" font-size="52" fill="#484848" font-family="'Liberation Sans', sans-serif" text-anchor="middle" textLength="35.0" lengthAdjust="spacingAndGlyphs" stroke="#484848" stroke-width="2.2">Y</text>
<text x="3455.3" y="599.5" font-size="52" fill="#484848" font-family="'Liberation Sans', sans-serif" text-anchor="middle" textLength="35.0" lengthAdjust="spacingAndGlyphs" stroke="#484848" stroke-width="2.2">Z</text>
<text x="3537.2" y="593.3" font-size="37" fill="#484848" font-family="'Liberation Sans', sans-serif" text-anchor="middle" textLength="46.0" lengthAdjust="spacingAndGlyphs" >XY</text>
<path d="M3573.9,610.3 L3573.9,615.8 L3568.4,615.8 Z" fill="#000" />
<rect x="3579.3" y="541.5" width="79.7" height="78.0" fill="#b4f4b4" />
<rect x="3579.3" y="541.5" width="79.7" height="3.5" fill="#848c88" />
<rect x="3579.3" y="541.5" width="3.5" height="78.0" fill="#848c88" />
<rect x="3579.3" y="616.5" width="79.7" height="3.0" fill="#fff" />
<rect x="3656.0" y="541.5" width="3.0" height="78.0" fill="#fff" />
<text x="3617.8" y="580.0" font-size="35" fill="#34483c" font-family="'Liberation Sans', sans-serif" text-anchor="middle" textLength="45.5" lengthAdjust="spacingAndGlyphs" >XY</text>
<path d="M3626.6,611.0 L3626.6,593.8 A12.8,12.8 0 0 1 3652.1,593.8 L3652.1,611.0 L3643.2,611.0 L3643.2,593.8 A3.8,3.8 0 0 0 3635.5,593.8 L3635.5,611.0 Z" fill="url(#gm19)" stroke="#5a3434" stroke-width="2.2" />
<rect x="3684.8" y="531.0" width="3.0" height="98.0" fill="#9a9a9a" />
<rect x="3687.8" y="531.0" width="2.0" height="98.0" fill="#fdfdfd" />
<rect x="3698.3" y="537.0" width="2.5" height="84.0" fill="#9c9c9c" />
<rect x="3700.8" y="537.0" width="1.5" height="84.0" fill="#fff" />
<rect x="3706.1" y="537.0" width="2.5" height="84.0" fill="#9c9c9c" />
<rect x="3708.6" y="537.0" width="1.5" height="84.0" fill="#fff" />
<rect x="3728.7" y="551.0" width="3.2" height="37.0" fill="#333" />
<rect x="3739.2" y="551.0" width="3.2" height="37.0" fill="#333" />
<rect x="3749.7" y="551.0" width="3.2" height="37.0" fill="#333" />
<rect x="3724.2" y="556.6" width="32.5" height="3.2" fill="#333" />
<rect x="3724.2" y="563.9" width="32.5" height="3.2" fill="#333" />
<rect x="3724.2" y="571.4" width="32.5" height="3.2" fill="#333" />
<rect x="3724.2" y="579.4" width="32.5" height="3.2" fill="#333" />
<path d="M3755.7,607.5 L3755.7,590.2 A12.8,12.8 0 0 1 3781.2,590.2 L3781.2,607.5 L3772.3,607.5 L3772.3,590.2 A3.8,3.8 0 0 0 3764.6,590.2 L3764.6,607.5 Z" fill="url(#gm20)" stroke="#5a3434" stroke-width="2.2" />
<line x1="3807.5" y1="567.8" x2="3840.0" y2="567.8" stroke="#d01020" stroke-width="2.8" />
<line x1="3823.5" y1="551.0" x2="3823.5" y2="584.5" stroke="#a01020" stroke-width="2.8" />
<circle cx="3823.5" cy="567.8" r="6.5" fill="#d8101c"/>
<path d="M3838.6,607.5 L3838.6,590.2 A12.8,12.8 0 0 1 3864.1,590.2 L3864.1,607.5 L3855.2,607.5 L3855.2,590.2 A3.8,3.8 0 0 0 3847.5,590.2 L3847.5,607.5 Z" fill="url(#gm21)" stroke="#5a3434" stroke-width="2.2" />
<rect x="3876.0" y="541.5" width="79.4" height="78.0" fill="#b4f4b4" />
<rect x="3876.0" y="541.5" width="79.4" height="3.5" fill="#848c88" />
<rect x="3876.0" y="541.5" width="3.5" height="78.0" fill="#848c88" />
<rect x="3876.0" y="616.5" width="79.4" height="3.0" fill="#fff" />
<rect x="3952.4" y="541.5" width="3.0" height="78.0" fill="#fff" />
<rect x="3903.5" y="565.8" width="10.0" height="9.5" fill="#fff" stroke="#2c3c34" stroke-width="3" />
<path d="M3923.0,610.5 L3923.0,593.2 A12.8,12.8 0 0 1 3948.5,593.2 L3948.5,610.5 L3939.6,610.5 L3939.6,593.2 A3.8,3.8 0 0 0 3931.9,593.2 L3931.9,610.5 Z" fill="url(#gm22)" stroke="#5a3434" stroke-width="2.2" />
<rect x="3959.5" y="541.5" width="79.2" height="78.0" fill="#b4f4b4" />
<rect x="3959.5" y="541.5" width="79.2" height="3.5" fill="#848c88" />
<rect x="3959.5" y="541.5" width="3.5" height="78.0" fill="#848c88" />
<rect x="3959.5" y="616.5" width="79.2" height="3.0" fill="#fff" />
<rect x="4035.7" y="541.5" width="3.0" height="78.0" fill="#fff" />
<rect x="3977.3" y="564.4" width="40.0" height="3.2" fill="#2c3c34" />
<rect x="4018.3" y="561.5" width="9.5" height="9.5" fill="#fff" stroke="#2c3c34" stroke-width="3" />
<path d="M4006.3,610.5 L4006.3,593.2 A12.8,12.8 0 0 1 4031.8,593.2 L4031.8,610.5 L4022.9,610.5 L4022.9,593.2 A3.8,3.8 0 0 0 4015.2,593.2 L4015.2,610.5 Z" fill="url(#gm23)" stroke="#5a3434" stroke-width="2.2" />
<rect x="4042.6" y="541.5" width="79.4" height="78.0" fill="#b4f4b4" />
<rect x="4042.6" y="541.5" width="79.4" height="3.5" fill="#848c88" />
<rect x="4042.6" y="541.5" width="3.5" height="78.0" fill="#848c88" />
<rect x="4042.6" y="616.5" width="79.4" height="3.0" fill="#fff" />
<rect x="4119.0" y="541.5" width="3.0" height="78.0" fill="#fff" />
<rect x="4060.2" y="563.8" width="53.0" height="3.2" fill="#2c3c34" />
<rect x="4083.0" y="560.8" width="9.0" height="9.5" fill="#fff" stroke="#2c3c34" stroke-width="3" />
<path d="M4088.4,610.5 L4088.4,593.2 A12.8,12.8 0 0 1 4113.9,593.2 L4113.9,610.5 L4105.0,610.5 L4105.0,593.2 A3.8,3.8 0 0 0 4097.3,593.2 L4097.3,610.5 Z" fill="url(#gm24)" stroke="#5a3434" stroke-width="2.2" />
<path d="M4139.5,572.6 L4177.8,555.1 L4161.4,583.6 Z" fill="#ececec" stroke="#333" stroke-width="2.6" />
<path d="M4168.0,607.5 L4168.0,590.2 A12.8,12.8 0 0 1 4193.5,590.2 L4193.5,607.5 L4184.6,607.5 L4184.6,590.2 A3.8,3.8 0 0 0 4176.9,590.2 L4176.9,607.5 Z" fill="url(#gm25)" stroke="#5a3434" stroke-width="2.2" />
<path d="M4222.7,572.6 L4260,555 L4243.5,583.6 Z" fill="#ececec" stroke="#333" stroke-width="2.6" />
<path d="M4251.2,607.5 L4251.2,590.2 A12.8,12.8 0 0 1 4276.7,590.2 L4276.7,607.5 L4267.8,607.5 L4267.8,590.2 A3.8,3.8 0 0 0 4260.1,590.2 L4260.1,607.5 Z" fill="url(#gm26)" stroke="#5a3434" stroke-width="2.2" />
<rect x="4297.7" y="562.0" width="2.6" height="40.0" fill="#9a9a9a" />
<rect x="4300.3" y="562.0" width="1.5" height="40.0" fill="#fbfbfb" />
<path d="M4333.3,549.5 L4337.6,558.6 L4347.6,557.8 L4341.8,566.0 L4347.6,574.2 L4337.6,573.4 L4333.3,582.5 L4329.1,573.4 L4319.0,574.2 L4324.8,566.0 L4319.0,557.8 L4329.1,558.6 Z" fill="#e4f0f4" stroke="#333" stroke-width="2.4" />
<rect x="4331.5" y="564.0" width="4.0" height="4.0" fill="#223" />
<path d="M4348.7,607.5 L4348.7,590.2 A12.8,12.8 0 0 1 4374.2,590.2 L4374.2,607.5 L4365.3,607.5 L4365.3,590.2 A3.8,3.8 0 0 0 4357.6,590.2 L4357.6,607.5 Z" fill="url(#gm27)" stroke="#5a3434" stroke-width="2.2" />
<rect x="4388.7" y="541.5" width="79.3" height="78.5" fill="#b4f4b4" />
<rect x="4388.7" y="541.5" width="79.3" height="3.5" fill="#848c88" />
<rect x="4388.7" y="541.5" width="3.5" height="78.5" fill="#848c88" />
<rect x="4388.7" y="617.0" width="79.3" height="3.0" fill="#fff" />
<rect x="4465.0" y="541.5" width="3.0" height="78.5" fill="#fff" />
<text x="4427.0" y="579.3" font-size="35" fill="#34483c" font-family="'Liberation Sans', sans-serif" text-anchor="middle" textLength="45.0" lengthAdjust="spacingAndGlyphs" >XY</text>
<path d="M4435.2,610.5 L4435.2,593.2 A12.8,12.8 0 0 1 4460.7,593.2 L4460.7,610.5 L4451.8,610.5 L4451.8,593.2 A3.8,3.8 0 0 0 4444.1,593.2 L4444.1,610.5 Z" fill="url(#gm28)" stroke="#5a3434" stroke-width="2.2" />
<rect x="4478.5" y="531.0" width="3.0" height="98.0" fill="#9a9a9a" />
<rect x="4481.5" y="531.0" width="2.0" height="98.0" fill="#fdfdfd" />
<rect x="35.0" y="629.0" width="103.0" height="2.5" fill="#a0a0a0" />
<path d="M162.0,654.0 H155.1 V679.2 H162.0" fill="none" stroke="#c4c4c4" stroke-width="2.8" />
<path d="M166.8,666.5 H184.8 M175.8,657.5 V675.5" fill="none" stroke="#c4c4c4" stroke-width="2.8" />
<path d="M192.0,654.0 H198.4 V679.2 H192.0" fill="none" stroke="#c4c4c4" stroke-width="2.8" />
<path d="M219.0,654.0 H212.4 V679.2 H219.0" fill="none" stroke="#c4c4c4" stroke-width="2.8" />
<text x="224.7" y="673.5" font-size="27.5" fill="#c4c4c4" font-family="'Liberation Sans', sans-serif" textLength="86.5" lengthAdjust="spacingAndGlyphs" >正投影</text>
<path d="M311.0,654.0 H317.6 V679.2 H311.0" fill="none" stroke="#c4c4c4" stroke-width="2.8" />
<path d="M340.0,654.0 H332.4 V679.2 H340.0" fill="none" stroke="#c4c4c4" stroke-width="2.8" />
<text x="343.5" y="673.5" font-size="27.5" fill="#c4c4c4" font-family="'Liberation Sans', sans-serif" textLength="177.4" lengthAdjust="spacingAndGlyphs" >シェーディング</text>
<path d="M525.7,666.5 H543.7 M534.7,657.5 V675.5" fill="none" stroke="#c4c4c4" stroke-width="2.8" />
<text x="553.5" y="673.5" font-size="27.5" fill="#c4c4c4" font-family="'Liberation Sans', sans-serif" textLength="102.5" lengthAdjust="spacingAndGlyphs" >エッジ面</text>
<path d="M657.0,654.0 H664.6 V679.2 H657.0" fill="none" stroke="#c4c4c4" stroke-width="2.8" />
<path d="M2316.0,1279.3 L2708.6,1506.2 L2316.0,1732.6 L1923.4,1506.2 Z" fill="#88c5d2" />
<path d="M1923.4,1506.2 L2316.0,1732.6 L2316.3,2185.8 L1923.4,1959.5 Z" fill="#6ea2ad" />
<path d="M2316.0,1732.6 L2708.6,1506.2 L2708.6,1959.5 L2316.3,2185.8 Z" fill="#72a7b2" />
<line x1="2316.0" y1="1279.3" x2="1923.4" y2="1506.2" stroke="#f2ffff" stroke-width="2.8" stroke-linecap="round"/>
<line x1="2316.0" y1="1279.3" x2="2708.6" y2="1506.2" stroke="#f2ffff" stroke-width="2.8" stroke-linecap="round"/>
<line x1="1923.4" y1="1506.2" x2="2316.0" y2="1732.6" stroke="#f2ffff" stroke-width="2.8" stroke-linecap="round"/>
<line x1="2708.6" y1="1506.2" x2="2316.0" y2="1732.6" stroke="#f2ffff" stroke-width="2.8" stroke-linecap="round"/>
<line x1="1923.4" y1="1506.2" x2="1923.4" y2="1959.5" stroke="#f2ffff" stroke-width="2.8" stroke-linecap="round"/>
<line x1="2708.6" y1="1506.2" x2="2708.6" y2="1959.5" stroke="#f2ffff" stroke-width="2.8" stroke-linecap="round"/>
<line x1="1923.4" y1="1959.5" x2="2316.3" y2="2185.8" stroke="#f2ffff" stroke-width="2.8" stroke-linecap="round"/>
<line x1="2708.6" y1="1959.5" x2="2316.3" y2="2185.8" stroke="#f2ffff" stroke-width="2.8" stroke-linecap="round"/>
<line x1="2316.0" y1="1732.6" x2="2316.3" y2="2185.8" stroke="#f2ffff" stroke-width="2.8" stroke-linecap="round"/>
<rect x="2297.0" y="1939.0" width="41.0" height="42.0" fill="none" stroke="#a9c4cb" stroke-width="2" />
<rect x="2303.0" y="1945.0" width="29.0" height="30.0" fill="none" stroke="#9dbac2" stroke-width="1.5" />
<line x1="2256.0" y1="1846.0" x2="2256.0" y2="1924.5" stroke="#2fa83a" stroke-width="2.6" />
<line x1="2256.0" y1="1924.5" x2="2316.2" y2="1889.6" stroke="#2f8f4a" stroke-width="2.6" />
<line x1="2258.0" y1="1854.7" x2="2316.2" y2="1889.6" stroke="#1a2a8c" stroke-width="2.8" />
<line x1="2374.5" y1="1857.0" x2="2316.2" y2="1889.6" stroke="#1a2a8c" stroke-width="2.8" />
<line x1="2375.2" y1="1848.6" x2="2375.2" y2="1923.0" stroke="#8c3030" stroke-width="2.8" />
<line x1="2316.2" y1="1889.6" x2="2375.2" y2="1923.5" stroke="#a83838" stroke-width="2.8" />
<line x1="2192.0" y1="1887.0" x2="2282.5" y2="1939.0" stroke="#3a8a52" stroke-width="2.6" />
<line x1="2441.5" y1="1887.0" x2="2352.3" y2="1940.0" stroke="#d6da4a" stroke-width="3" />
<line x1="2316.2" y1="1917.5" x2="2316.2" y2="1790.0" stroke="#1418c0" stroke-width="3.4" />
<path d="M2316.2,1750 L2327.5,1800 Q2327.5,1812 2316.2,1812 Q2304.9,1812 2304.9,1800 Z" fill="#1010c8" />
<path d="M2139.1,1855.9 L2192,1875 Q2196,1886 2187,1893 Q2178,1896 2176,1893 Z" fill="#18a020" />
<ellipse cx="2186.5" cy="1885" rx="6.5" ry="10.5" transform="rotate(-30 2186.5 1885)" fill="#0c5c10"/>
<path d="M2499.3,1854.7 L2445,1872 Q2440,1884 2448,1892 Q2456,1895 2460,1891 Z" fill="#d81818" />
<ellipse cx="2447.5" cy="1883.6" rx="6.5" ry="10.5" transform="rotate(30 2447.5 1883.6)" fill="#6c0808"/>
<path d="M2315,1723.6 H2325 L2315,1736 H2325" fill="none" stroke="#0c2c7c" stroke-width="3.2" />
<path d="M2131.5,1828 L2137,1840 M2142.5,1828 L2134,1848" fill="none" stroke="#58a884" stroke-width="2.6" />
<path d="M2499.5,1828 L2511,1843.5 M2511,1828 L2499.5,1843.5" fill="none" stroke="#dcdc64" stroke-width="2.6" />
<ellipse cx="2323.4" cy="1854" rx="247.2" ry="152.5" fill="none" stroke="#e60018" stroke-width="9"/>
<line x1="1956.0" y1="2340.8" x2="2155.5" y2="2054.0" stroke="#e60018" stroke-width="9.6" />
<path d="M2186.1,2008.6 L2178.1,2088.7 L2153.4,2058.5 L2114,2044.4 Z" fill="#e60018" />
<text x="1860.5" y="2419.7" font-size="62.3" fill="#e60018" font-family="'Liberation Sans', sans-serif" textLength="134.0" lengthAdjust="spacingAndGlyphs" >基点</text>
<ellipse cx="4376" cy="823.7" rx="81" ry="45" fill="none" stroke="#9a9aa0" stroke-width="14"/>
<ellipse cx="4376" cy="824" rx="74" ry="39" fill="#3a3a3a" opacity="0.45"/>
<path d="M4376.0,721.6 L4429.0,746.4 L4376.0,773.7 L4326.5,746.4 Z" fill="#a6a6ae" />
<path d="M4326.5,746.4 L4376.0,773.7 L4376.0,836.0 L4328.0,805.7 Z" fill="#9a9aa2" />
<path d="M4376.0,773.7 L4429.0,746.4 L4427.3,805.7 L4376.0,836.0 Z" fill="#9e9ea6" />
<line x1="4326.5" y1="746.4" x2="4376.0" y2="773.7" stroke="#8a8a92" stroke-width="1.6" />
<line x1="4429.0" y1="746.4" x2="4376.0" y2="773.7" stroke="#8a8a92" stroke-width="1.6" />
<line x1="4376.0" y1="773.7" x2="4376.0" y2="836.0" stroke="#8a8a92" stroke-width="1.6" />
<path d="M4340,752 L4376,771 M4412,752 L4376,771" fill="none" stroke="#92929a" stroke-width="1.4" />
<text x="4352.0" y="800.0" font-size="15" fill="#84848c" font-family="'Liberation Sans', sans-serif" text-anchor="middle" >左</text>
<text x="4402.0" y="800.0" font-size="15" fill="#84848c" font-family="'Liberation Sans', sans-serif" text-anchor="middle" >前</text>
<text x="4378.0" y="752.0" font-size="13" fill="#8c8c94" font-family="'Liberation Sans', sans-serif" text-anchor="middle" >上</text>
<line x1="209.3" y1="2786.0" x2="209.3" y2="2736.0" stroke="#14148c" stroke-width="3.2" />
<line x1="209.3" y1="2786.0" x2="256.2" y2="2762.3" stroke="#b83040" stroke-width="2.6" />
<line x1="209.3" y1="2786.0" x2="167.7" y2="2762.3" stroke="#4a8a52" stroke-width="2.6" />
<text x="213.5" y="2728.0" font-size="21" fill="#2020a0" font-family="'Liberation Sans', sans-serif" text-anchor="middle" font-weight="bold" >z</text>
<text x="261.5" y="2753.0" font-size="21" fill="#d86060" font-family="'Liberation Sans', sans-serif" text-anchor="middle" >x</text>
<text x="170.5" y="2751.0" font-size="21" fill="#5a9a5a" font-family="'Liberation Sans', sans-serif" text-anchor="middle" >y</text>
<rect x="60.0" y="2777.0" width="49.0" height="49.0" fill="#d6d6d6" stroke="#8c8c8c" stroke-width="2.4" rx="7"/>
<path d="M81,2791.5 L81,2812.5 L94.5,2802 Z" fill="#111" />
<rect x="4528.0" y="701.5" width="468.0" height="2.8" fill="#989898" />
<path d="M4529.5,701.5 L4529.5,644 Q4529.5,641 4532.5,641 L4597,641 Q4600,641 4600,644 L4600,701.5" fill="#fdfdfd" stroke="#959595" stroke-width="2.4" />
<path d="M4604,705 L4604,640 Q4604,637 4607,637 L4673,637 Q4676,637 4676,640 L4676,705 Z" fill="#f6f6f6" stroke="#a0a0a0" stroke-width="2.4" />
<rect x="4605.3" y="700.0" width="69.4" height="6.5" fill="#f4f4f4" />
<path d="M4679,701.5 L4679,644 Q4679,641 4682,641 L4747,641 Q4750,641 4750,644 L4750,701.5" fill="#fdfdfd" stroke="#959595" stroke-width="2.4" />
<path d="M4754,701.5 L4754,644 Q4754,641 4757,641 L4822,641 Q4825,641 4825,644 L4825,701.5" fill="#fdfdfd" stroke="#959595" stroke-width="2.4" />
<path d="M4829,701.5 L4829,644 Q4829,641 4832,641 L4897,641 Q4900,641 4900,644 L4900,701.5" fill="#fdfdfd" stroke="#959595" stroke-width="2.4" />
<path d="M4904,701.5 L4904,644 Q4904,641 4907,641 L4973,641 Q4976,641 4976,644 L4976,701.5" fill="#fdfdfd" stroke="#959595" stroke-width="2.4" />
<line x1="4565.0" y1="669.0" x2="4587.0" y2="669.0" stroke="#d88c50" stroke-width="3.4" />
<line x1="4565.0" y1="669.0" x2="4577.0" y2="681.0" stroke="#d88c50" stroke-width="3.4" />
<line x1="4565.0" y1="669.0" x2="4565.0" y2="691.0" stroke="#d88c50" stroke-width="3.4" />
<line x1="4565.0" y1="669.0" x2="4553.0" y2="681.0" stroke="#d88c50" stroke-width="3.4" />
<line x1="4565.0" y1="669.0" x2="4543.0" y2="669.0" stroke="#d88c50" stroke-width="3.4" />
<line x1="4565.0" y1="669.0" x2="4553.0" y2="657.0" stroke="#d88c50" stroke-width="3.4" />
<line x1="4565.0" y1="669.0" x2="4565.0" y2="647.0" stroke="#d88c50" stroke-width="3.4" />
<line x1="4565.0" y1="669.0" x2="4577.0" y2="657.0" stroke="#d88c50" stroke-width="3.4" />
<circle cx="4565" cy="669" r="13" fill="#e8a050"/>
<circle cx="4565" cy="669" r="7" fill="#fbe458"/>
<path d="M4619,647 L4619,690 L4662,690" fill="none" stroke="#333" stroke-width="2.6" />
<path d="M4622,690 Q4624,652 4660,649" fill="none" stroke="#3c6ca0" stroke-width="16" />
<path d="M4622,690 Q4624,652 4660,649" fill="none" stroke="#a4d0f0" stroke-width="10" />
<rect x="4615.0" y="643.0" width="7.0" height="7.0" fill="#fff" stroke="#333" stroke-width="2" />
<rect x="4657.0" y="686.0" width="8.0" height="8.0" fill="#fff" stroke="#333" stroke-width="2" />
<rect x="4702.0" y="645.0" width="26.0" height="24.0" fill="#d8d8d8" stroke="#444" stroke-width="2.6" />
<path d="M4715,669 L4715,678 M4696,688 L4696,678 L4734,678 L4734,688 M4715,678 L4715,688" fill="none" stroke="#444" stroke-width="2.6" />
<rect x="4691.0" y="686.0" width="10.0" height="9.0" fill="#eee" stroke="#444" stroke-width="2.2" />
<rect x="4710.0" y="686.0" width="10.0" height="9.0" fill="#eee" stroke="#444" stroke-width="2.2" />
<rect x="4729.0" y="686.0" width="10.0" height="9.0" fill="#eee" stroke="#444" stroke-width="2.2" />
<circle cx="4797" cy="669" r="18" fill="#e4e4e4" stroke="#3a3a3a" stroke-width="6"/>
<circle cx="4797" cy="669" r="8" fill="#ccc" stroke="#666" stroke-width="2.5"/>
<circle cx="4797" cy="669" r="2.5" fill="#333"/>
<path d="M4772,654 Q4764,669 4772,685" fill="none" stroke="#999" stroke-width="2.5" />
<path d="M4767,656 Q4760,669 4767,683" fill="none" stroke="#bbb" stroke-width="2" />
<rect x="4841.0" y="647.0" width="49.0" height="35.0" fill="#e0e0e0" stroke="#444" stroke-width="2.8" />
<rect x="4858.0" y="655.0" width="18.0" height="17.0" fill="#c8c8c8" stroke="#555" stroke-width="2" rx="4"/>
<rect x="4860.0" y="682.0" width="12.0" height="6.0" fill="#666" />
<rect x="4846.0" y="688.0" width="40.0" height="3.0" fill="#444" />
<line x1="4918.0" y1="689.0" x2="4952.0" y2="656.0" stroke="#5a4a44" stroke-width="8" />
<line x1="4918.0" y1="689.0" x2="4952.0" y2="656.0" stroke="#a8948c" stroke-width="3.5" />
<path d="M4935,648 Q4950,640 4962,652 L4966,662 L4958,666 L4953,657 L4943,658 Z" fill="#444" />
<rect x="4553.0" y="719.0" width="375.0" height="48.0" fill="#fff" />
<rect x="4553.0" y="719.0" width="375.0" height="3.4" fill="#1a1a1a" />
<rect x="4553.0" y="719.0" width="3.4" height="48.0" fill="#1a1a1a" />
<rect x="4553.0" y="763.6" width="375.0" height="3.4" fill="#f4f4f4" />
<rect x="4924.6" y="719.0" width="3.4" height="48.0" fill="#f4f4f4" />
<text x="4560.0" y="756.0" font-size="29" fill="#111" font-family="'Liberation Sans', sans-serif" textLength="173.0" lengthAdjust="spacingAndGlyphs" >Rectangle004</text>
<rect x="4939.5" y="717.5" width="41.0" height="48.5" fill="#8fdaf0" />
<rect x="4553.0" y="784.0" width="423.0" height="64.0" fill="#fff" />
<rect x="4553.0" y="784.0" width="423.0" height="4.5" fill="#6c6c6c" />
<rect x="4553.0" y="784.0" width="4.5" height="64.0" fill="#6c6c6c" />
<rect x="4553.0" y="845.0" width="423.0" height="3.0" fill="#fdfdfd" />
<text x="4560.0" y="828.0" font-size="30" fill="#000" font-family="'Liberation Sans', sans-serif" textLength="225.0" lengthAdjust="spacingAndGlyphs" >モディファイヤ リスト</text>
<path d="M4948,812 L4966,812 L4957,821 Z" fill="#000" />
<rect x="4569.0" y="862.0" width="183.5" height="50.0" fill="#f0f0f0" />
<rect x="4569.0" y="862.0" width="183.5" height="3.0" fill="#fcfcfc" />
<rect x="4569.0" y="862.0" width="3.0" height="50.0" fill="#fcfcfc" />
<rect x="4569.0" y="909.0" width="183.5" height="3.0" fill="#a4a4a4" />
<rect x="4749.5" y="862.0" width="3.0" height="50.0" fill="#a4a4a4" />
<text x="4661.0" y="897.0" font-size="30" fill="#a8a8a8" font-family="'Liberation Sans', sans-serif" text-anchor="middle" textLength="108.0" lengthAdjust="spacingAndGlyphs" >押し出し</text>
<rect x="4763.0" y="862.0" width="183.5" height="50.0" fill="#f0f0f0" />
<rect x="4763.0" y="862.0" width="183.5" height="3.0" fill="#fcfcfc" />
<rect x="4763.0" y="862.0" width="3.0" height="50.0" fill="#fcfcfc" />
<rect x="4763.0" y="909.0" width="183.5" height="3.0" fill="#a4a4a4" />
<rect x="4943.5" y="862.0" width="3.0" height="50.0" fill="#a4a4a4" />
<text x="4855.0" y="897.0" font-size="30" fill="#000" font-family="'Liberation Sans', sans-serif" text-anchor="middle" textLength="175.0" lengthAdjust="spacingAndGlyphs" >ポリゴンを編集</text>
<rect x="4569.0" y="922.5" width="183.5" height="50.0" fill="#f0f0f0" />
<rect x="4569.0" y="922.5" width="183.5" height="3.0" fill="#fcfcfc" />
<rect x="4569.0" y="922.5" width="3.0" height="50.0" fill="#fcfcfc" />
<rect x="4569.0" y="969.5" width="183.5" height="3.0" fill="#a4a4a4" />
<rect x="4749.5" y="922.5" width="3.0" height="50.0" fill="#a4a4a4" />
<text x="4661.0" y="957.5" font-size="30" fill="#a8a8a8" font-family="'Liberation Sans', sans-serif" text-anchor="middle" textLength="112.0" lengthAdjust="spacingAndGlyphs" >スウィープ</text>
<rect x="4763.0" y="922.5" width="183.5" height="50.0" fill="#f0f0f0" />
<rect x="4763.0" y="922.5" width="183.5" height="3.0" fill="#fcfcfc" />
<rect x="4763.0" y="922.5" width="3.0" height="50.0" fill="#fcfcfc" />
<rect x="4763.0" y="969.5" width="183.5" height="3.0" fill="#a4a4a4" />
<rect x="4943.5" y="922.5" width="3.0" height="50.0" fill="#a4a4a4" />
<text x="4855.0" y="957.5" font-size="30" fill="#000" font-family="'Liberation Sans', sans-serif" text-anchor="middle" textLength="130.0" lengthAdjust="spacingAndGlyphs" >UVW マップ</text>
<rect x="4569.0" y="979.5" width="183.5" height="50.0" fill="#f0f0f0" />
<rect x="4569.0" y="979.5" width="183.5" height="3.0" fill="#fcfcfc" />
<rect x="4569.0" y="979.5" width="3.0" height="50.0" fill="#fcfcfc" />
<rect x="4569.0" y="1026.5" width="183.5" height="3.0" fill="#a4a4a4" />
<rect x="4749.5" y="979.5" width="3.0" height="50.0" fill="#a4a4a4" />
<text x="4661.0" y="1014.5" font-size="30" fill="#a8a8a8" font-family="'Liberation Sans', sans-serif" text-anchor="middle" textLength="66.0" lengthAdjust="spacingAndGlyphs" >レイズ</text>
<rect x="4763.0" y="979.5" width="183.5" height="50.0" fill="#f0f0f0" />
<rect x="4763.0" y="979.5" width="183.5" height="3.0" fill="#fcfcfc" />
<rect x="4763.0" y="979.5" width="3.0" height="50.0" fill="#fcfcfc" />
<rect x="4763.0" y="1026.5" width="183.5" height="3.0" fill="#a4a4a4" />
<rect x="4943.5" y="979.5" width="3.0" height="50.0" fill="#a4a4a4" />
<text x="4855.0" y="1014.5" font-size="30" fill="#000" font-family="'Liberation Sans', sans-serif" text-anchor="middle" textLength="160.0" lengthAdjust="spacingAndGlyphs" >FFD(ボックス)</text>
<rect x="4569.0" y="1038.0" width="183.5" height="50.0" fill="#f0f0f0" />
<rect x="4569.0" y="1038.0" width="183.5" height="3.0" fill="#fcfcfc" />
<rect x="4569.0" y="1038.0" width="3.0" height="50.0" fill="#fcfcfc" />
<rect x="4569.0" y="1085.0" width="183.5" height="3.0" fill="#a4a4a4" />
<rect x="4749.5" y="1038.0" width="3.0" height="50.0" fill="#a4a4a4" />
<text x="4661.0" y="1073.0" font-size="30" fill="#000" font-family="'Liberation Sans', sans-serif" text-anchor="middle" textLength="172.0" lengthAdjust="spacingAndGlyphs" >ターボスムーズ</text>
<rect x="4763.0" y="1038.0" width="183.5" height="50.0" fill="#f0f0f0" />
<rect x="4763.0" y="1038.0" width="183.5" height="3.0" fill="#fcfcfc" />
<rect x="4763.0" y="1038.0" width="3.0" height="50.0" fill="#fcfcfc" />
<rect x="4763.0" y="1085.0" width="183.5" height="3.0" fill="#a4a4a4" />
<rect x="4943.5" y="1038.0" width="3.0" height="50.0" fill="#a4a4a4" />
<text x="4855.0" y="1073.0" font-size="30" fill="#000" font-family="'Liberation Sans', sans-serif" text-anchor="middle" textLength="92.0" lengthAdjust="spacingAndGlyphs" >面分割</text>
<rect x="4551.0" y="1111.0" width="418.5" height="327.0" fill="#fff" stroke="#8e8e8e" stroke-width="3" />
<rect x="4556.0" y="1116.0" width="409.0" height="39.5" fill="#787878" />
<text x="4719.0" y="1147.0" font-size="31" fill="#000" font-family="'Liberation Sans', sans-serif" text-anchor="middle" textLength="108.0" lengthAdjust="spacingAndGlyphs" >押し出し</text>
<circle cx="4590" cy="1131" r="9.5" fill="#fff" stroke="#000" stroke-width="2.4"/>
<rect x="4585.5" y="1141.0" width="9.0" height="9.5" fill="#fff" stroke="#000" stroke-width="2.2" />
<rect x="4588.5" y="1128.0" width="3.0" height="3.0" fill="#000" />
<text x="4612.0" y="1188.0" font-size="29" fill="#111" font-family="'Liberation Sans', sans-serif" textLength="123.0" lengthAdjust="spacingAndGlyphs" >Rectangle</text>
<rect x="4556.0" y="1194.5" width="409.0" height="3.0" fill="#6a6a6a" />
<line x1="4561.0" y1="1477.0" x2="4580.0" y2="1477.0" stroke="#111" stroke-width="3" />
<rect x="4578.0" y="1466.0" width="24.0" height="22.0" fill="#c8c8c8" stroke="#222" stroke-width="2.8" />
<rect x="4584.0" y="1470.0" width="10.0" height="14.0" fill="#f4f4f4" />
<rect x="4629.0" y="1456.0" width="2.0" height="42.0" fill="#b4b4b4" />
<rect x="4631.0" y="1456.0" width="1.5" height="42.0" fill="#fff" />
<rect x="4644.0" y="1449.0" width="60.0" height="59.0" fill="#f6f6f6" />
<rect x="4644.0" y="1449.0" width="60.0" height="2.6" fill="#a0a0a0" />
<rect x="4644.0" y="1449.0" width="2.6" height="59.0" fill="#a0a0a0" />
<rect x="4644.0" y="1505.4" width="60.0" height="2.6" fill="#fff" />
<rect x="4701.4" y="1449.0" width="2.6" height="59.0" fill="#fff" />
<rect x="4668.0" y="1464.0" width="3.5" height="26.0" fill="#000" />
<rect x="4680.0" y="1464.0" width="3.5" height="26.0" fill="#000" />
<rect x="4664.5" y="1464.0" width="6.0" height="3.0" fill="#000" />
<rect x="4683.0" y="1464.0" width="5.0" height="3.0" fill="#000" />
<rect x="4722.0" y="1456.0" width="2.0" height="42.0" fill="#b4b4b4" />
<rect x="4724.0" y="1456.0" width="1.5" height="42.0" fill="#fff" />
<path d="M4751,1462 L4768,1488 L4786,1462 M4757,1476 L4762,1479 M4780,1476 L4775,1479" fill="none" stroke="#a8a8a8" stroke-width="2.6" />
<circle cx="4768" cy="1486" r="5" fill="#f0f0f0" stroke="#a8a8a8" stroke-width="2.2"/>
<path d="M4818,1476 L4818,1490 Q4828,1497 4840,1490 L4840,1476 Q4829,1470 4818,1476 Z" fill="#fff" stroke="#000" stroke-width="2.8" />
<path d="M4819,1475 Q4829,1481 4840,1475" fill="none" stroke="#000" stroke-width="2.4" />
<path d="M4823,1468 Q4831,1459 4839,1470" fill="none" stroke="#000" stroke-width="2.8" />
<rect x="4877.0" y="1456.0" width="2.0" height="42.0" fill="#b4b4b4" />
<rect x="4879.0" y="1456.0" width="1.5" height="42.0" fill="#fff" />
<rect x="4906.0" y="1462.0" width="30.0" height="27.0" fill="#e8ecf4" stroke="#1a1a8c" stroke-width="2.8" />
<rect x="4906.0" y="1462.0" width="30.0" height="6.5" fill="#1a1a8c" />
<rect x="4922.0" y="1475.0" width="22.0" height="17.0" fill="#dcdcdc" stroke="#333" stroke-width="1.6" stroke-dasharray="3,2"/>
<line x1="4918.0" y1="1484.0" x2="4944.0" y2="1484.0" stroke="#333" stroke-width="2" />
<line x1="4933.0" y1="1473.0" x2="4933.0" y2="1494.0" stroke="#333" stroke-width="2" />
<rect x="4534.0" y="1537.5" width="451.0" height="3.4" fill="#0a0a0a" />
<rect x="4982.0" y="1534.0" width="3.0" height="6.0" fill="#0a0a0a" />
<rect x="4534.0" y="1562.0" width="446.0" height="2.6" fill="#a4a4a4" />
<rect x="4544.0" y="1597.0" width="425.5" height="764.0" fill="none" stroke="#9c9c9c" stroke-width="2.6" />
<rect x="4546.5" y="1599.5" width="425.5" height="764.0" fill="none" stroke="#fdfdfd" stroke-width="1.6" />
<rect x="4555.0" y="1576.0" width="405.5" height="39.0" fill="#f0f0f0" />
<rect x="4555.0" y="1576.0" width="405.5" height="2.8" fill="#fcfcfc" />
<rect x="4555.0" y="1576.0" width="2.8" height="39.0" fill="#fcfcfc" />
<rect x="4555.0" y="1612.2" width="405.5" height="2.8" fill="#9a9a9a" />
<rect x="4957.7" y="1576.0" width="2.8" height="39.0" fill="#9a9a9a" />
<rect x="4569.0" y="1593.0" width="18.0" height="3.0" fill="#000" />
<text x="4758.0" y="1606.0" font-size="30" fill="#000" font-family="'Liberation Sans', sans-serif" text-anchor="middle" textLength="113.0" lengthAdjust="spacingAndGlyphs" >パラメータ</text>
<text x="4731.5" y="1673.5" font-size="30" fill="#000" font-family="'Liberation Sans', sans-serif" text-anchor="end" textLength="47.0" lengthAdjust="spacingAndGlyphs" >量 :</text>
<rect x="4763.5" y="1644.0" width="143.0" height="38.5" fill="#fff" />
<rect x="4763.5" y="1644.0" width="143.0" height="3.2" fill="#303030" />
<rect x="4763.5" y="1644.0" width="3.2" height="38.5" fill="#303030" />
<rect x="4763.5" y="1679.3" width="143.0" height="3.2" fill="#fdfdfd" />
<rect x="4903.3" y="1644.0" width="3.2" height="38.5" fill="#fdfdfd" />
<text x="4776.0" y="1675.0" font-size="28" fill="#1a1a1a" font-family="'Liberation Sans', sans-serif" textLength="83.0" lengthAdjust="spacingAndGlyphs" >1000.0</text>
<text x="4735.0" y="1722.5" font-size="30" fill="#000" font-family="'Liberation Sans', sans-serif" text-anchor="end" textLength="161.0" lengthAdjust="spacingAndGlyphs" >セグメント数 :</text>
<rect x="4763.5" y="1693.0" width="143.0" height="38.5" fill="#fff" />
<rect x="4763.5" y="1693.0" width="143.0" height="3.2" fill="#101010" />
<rect x="4763.5" y="1693.0" width="3.2" height="38.5" fill="#101010" />
<rect x="4763.5" y="1728.3" width="143.0" height="3.2" fill="#fdfdfd" />
<rect x="4903.3" y="1693.0" width="3.2" height="38.5" fill="#fdfdfd" />
<text x="4776.0" y="1724.0" font-size="28" fill="#1a1a1a" font-family="'Liberation Sans', sans-serif" >1</text>
<rect x="4915.0" y="1644.0" width="28.0" height="38.5" fill="#f0f0f0" />
<rect x="4915.0" y="1644.0" width="28.0" height="2.4" fill="#fdfdfd" />
<rect x="4915.0" y="1644.0" width="2.4" height="38.5" fill="#fdfdfd" />
<rect x="4915.0" y="1680.1" width="28.0" height="2.4" fill="#a0a0a0" />
<rect x="4940.6" y="1644.0" width="2.4" height="38.5" fill="#a0a0a0" />
<path d="M4921.5,1658.0 L4934.5,1658.0 L4928.0,1651.0 Z" fill="#000" />
<path d="M4921.5,1668.0 L4934.5,1668.0 L4928.0,1675.0 Z" fill="#000" />
<rect x="4915.0" y="1693.0" width="28.0" height="38.5" fill="#f0f0f0" />
<rect x="4915.0" y="1693.0" width="28.0" height="2.4" fill="#fdfdfd" />
<rect x="4915.0" y="1693.0" width="2.4" height="38.5" fill="#fdfdfd" />
<rect x="4915.0" y="1729.1" width="28.0" height="2.4" fill="#a0a0a0" />
<rect x="4940.6" y="1693.0" width="2.4" height="38.5" fill="#a0a0a0" />
<path d="M4921.5,1707.0 L4934.5,1707.0 L4928.0,1700.0 Z" fill="#000" />
<path d="M4921.5,1717.0 L4934.5,1717.0 L4928.0,1724.0 Z" fill="#000" />
<rect x="4554.0" y="1754.6" width="410.0" height="175.4" fill="none" stroke="#9c9c9c" stroke-width="2.4" />
<rect x="4556.0" y="1756.6" width="410.0" height="175.4" fill="none" stroke="#fdfdfd" stroke-width="1.4" />
<rect x="4572.0" y="1748.6" width="98.0" height="12.0" fill="#f0f0f0" />
<text x="4576.0" y="1765.6" font-size="30" fill="#000" font-family="'Liberation Sans', sans-serif" textLength="88.0" lengthAdjust="spacingAndGlyphs" >キャップ</text>
<rect x="4665.5" y="1783.0" width="29.5" height="29.5" fill="#fff" />
<rect x="4665.5" y="1783.0" width="29.5" height="3.4" fill="#787878" />
<rect x="4665.5" y="1783.0" width="3.4" height="29.5" fill="#787878" />
<rect x="4665.5" y="1810.1" width="29.5" height="2.4" fill="#fdfdfd" />
<rect x="4692.6" y="1783.0" width="2.4" height="29.5" fill="#fdfdfd" />
<rect x="4668.9" y="1786.4" width="23.5" height="2.4" fill="#b0b0b0" />
<rect x="4668.9" y="1786.4" width="2.4" height="23.5" fill="#b0b0b0" />
<path d="M4673.0,1796.0 L4678.5,1802.0 L4689.0,1791.0" fill="none" stroke="#000" stroke-width="6" stroke-linejoin="miter"/>
<text x="4710.5" y="1811.5" font-size="30" fill="#000" font-family="'Liberation Sans', sans-serif" textLength="148.0" lengthAdjust="spacingAndGlyphs" >始点キャップ</text>
<rect x="4665.5" y="1828.5" width="29.5" height="29.5" fill="#fff" />
<rect x="4665.5" y="1828.5" width="29.5" height="3.4" fill="#787878" />
<rect x="4665.5" y="1828.5" width="3.4" height="29.5" fill="#787878" />
<rect x="4665.5" y="1855.6" width="29.5" height="2.4" fill="#fdfdfd" />
<rect x="4692.6" y="1828.5" width="2.4" height="29.5" fill="#fdfdfd" />
<rect x="4668.9" y="1831.9" width="23.5" height="2.4" fill="#b0b0b0" />
<rect x="4668.9" y="1831.9" width="2.4" height="23.5" fill="#b0b0b0" />
<path d="M4673.0,1841.5 L4678.5,1847.5 L4689.0,1836.5" fill="none" stroke="#000" stroke-width="6" stroke-linejoin="miter"/>
<text x="4710.5" y="1857.5" font-size="30" fill="#000" font-family="'Liberation Sans', sans-serif" textLength="148.0" lengthAdjust="spacingAndGlyphs" >終点キャップ</text>
<circle cx="4616" cy="1896" r="11.8" fill="#fff" stroke="#fdfdfd" stroke-width="2"/>
<path d="M4607.4,1904.6 A12.2,12.2 0 0 1 4624.6,1887.4" fill="none" stroke="#808080" stroke-width="3.4" />
<path d="M4609.5,1902.5 A9.2,9.2 0 0 1 4622.5,1889.5" fill="none" stroke="#b4b4b4" stroke-width="2.6" />
<circle cx="4616" cy="1896" r="6.4" fill="#000"/>
<text x="4647.0" y="1907.0" font-size="30" fill="#000" font-family="'Liberation Sans', sans-serif" textLength="68.0" lengthAdjust="spacingAndGlyphs" >モーフ</text>
<circle cx="4811.5" cy="1896" r="11.8" fill="#fff" stroke="#fdfdfd" stroke-width="2"/>
<path d="M4802.9,1904.6 A12.2,12.2 0 0 1 4820.1,1887.4" fill="none" stroke="#808080" stroke-width="3.4" />
<path d="M4805.0,1902.5 A9.2,9.2 0 0 1 4818.0,1889.5" fill="none" stroke="#b4b4b4" stroke-width="2.6" />
<text x="4843.5" y="1907.0" font-size="30" fill="#000" font-family="'Liberation Sans', sans-serif" textLength="80.0" lengthAdjust="spacingAndGlyphs" >グリッド</text>
<rect x="4555.0" y="1957.0" width="409.0" height="167.0" fill="none" stroke="#9c9c9c" stroke-width="2.4" />
<rect x="4557.0" y="1959.0" width="409.0" height="167.0" fill="none" stroke="#fdfdfd" stroke-width="1.4" />
<rect x="4573.0" y="1951.0" width="66.0" height="12.0" fill="#f0f0f0" />
<text x="4577.0" y="1968.0" font-size="30" fill="#000" font-family="'Liberation Sans', sans-serif" textLength="56.0" lengthAdjust="spacingAndGlyphs" >出力</text>
<circle cx="4664.7" cy="1992" r="11.8" fill="#fff" stroke="#fdfdfd" stroke-width="2"/>
<path d="M4656.1,2000.6 A12.2,12.2 0 0 1 4673.3,1983.4" fill="none" stroke="#808080" stroke-width="3.4" />
<path d="M4658.2,1998.5 A9.2,9.2 0 0 1 4671.2,1985.5" fill="none" stroke="#b4b4b4" stroke-width="2.6" />
<text x="4695.0" y="2003.0" font-size="30" fill="#000" font-family="'Liberation Sans', sans-serif" textLength="66.0" lengthAdjust="spacingAndGlyphs" >パッチ</text>
<circle cx="4664.7" cy="2043" r="11.8" fill="#fff" stroke="#fdfdfd" stroke-width="2"/>
<path d="M4656.1,2051.6 A12.2,12.2 0 0 1 4673.3,2034.4" fill="none" stroke="#808080" stroke-width="3.4" />
<path d="M4658.2,2049.5 A9.2,9.2 0 0 1 4671.2,2036.5" fill="none" stroke="#b4b4b4" stroke-width="2.6" />
<circle cx="4664.7" cy="2043" r="6.4" fill="#000"/>
<text x="4695.0" y="2054.0" font-size="30" fill="#000" font-family="'Liberation Sans', sans-serif" textLength="83.0" lengthAdjust="spacingAndGlyphs" >メッシュ</text>
<circle cx="4664.7" cy="2094" r="11.8" fill="#fff" stroke="#fdfdfd" stroke-width="2"/>
<path d="M4656.1,2102.6 A12.2,12.2 0 0 1 4673.3,2085.4" fill="none" stroke="#808080" stroke-width="3.4" />
<path d="M4658.2,2100.5 A9.2,9.2 0 0 1 4671.2,2087.5" fill="none" stroke="#b4b4b4" stroke-width="2.6" />
<text x="4695.0" y="2104.5" font-size="28" fill="#1a1a1a" font-family="'Liberation Sans', sans-serif" textLength="84.0" lengthAdjust="spacingAndGlyphs" >NURBS</text>
<rect x="4557.0" y="2137.0" width="29.5" height="29.5" fill="#fff" />
<rect x="4557.0" y="2137.0" width="29.5" height="3.4" fill="#787878" />
<rect x="4557.0" y="2137.0" width="3.4" height="29.5" fill="#787878" />
<rect x="4557.0" y="2164.1" width="29.5" height="2.4" fill="#fdfdfd" />
<rect x="4584.1" y="2137.0" width="2.4" height="29.5" fill="#fdfdfd" />
<rect x="4560.4" y="2140.4" width="23.5" height="2.4" fill="#b0b0b0" />
<rect x="4560.4" y="2140.4" width="2.4" height="23.5" fill="#b0b0b0" />
<text x="4603.0" y="2164.0" font-size="30" fill="#000" font-family="'Liberation Sans', sans-serif" textLength="256.0" lengthAdjust="spacingAndGlyphs" >マッピング座標を生成</text>
<rect x="4557.0" y="2178.0" width="29.5" height="29.5" fill="#f4f4f4" />
<rect x="4557.0" y="2178.0" width="29.5" height="3.4" fill="#787878" />
<rect x="4557.0" y="2178.0" width="3.4" height="29.5" fill="#787878" />
<rect x="4557.0" y="2205.1" width="29.5" height="2.4" fill="#fdfdfd" />
<rect x="4584.1" y="2178.0" width="2.4" height="29.5" fill="#fdfdfd" />
<rect x="4560.4" y="2181.4" width="23.5" height="2.4" fill="#c4c4c4" />
<rect x="4560.4" y="2181.4" width="2.4" height="23.5" fill="#c4c4c4" />
<path d="M4564.5,2191.0 L4570.0,2197.0 L4580.5,2186.0" fill="none" stroke="#b0b0b0" stroke-width="6" stroke-linejoin="miter"/>
<text x="4603.0" y="2204.5" font-size="30" fill="#a8a8a8" font-family="'Liberation Sans', sans-serif" textLength="328.0" lengthAdjust="spacingAndGlyphs" >リアル-ワールド マップ サイズ</text>
<rect x="4557.0" y="2220.0" width="29.5" height="29.5" fill="#fff" />
<rect x="4557.0" y="2220.0" width="29.5" height="3.4" fill="#787878" />
<rect x="4557.0" y="2220.0" width="3.4" height="29.5" fill="#787878" />
<rect x="4557.0" y="2247.1" width="29.5" height="2.4" fill="#fdfdfd" />
<rect x="4584.1" y="2220.0" width="2.4" height="29.5" fill="#fdfdfd" />
<rect x="4560.4" y="2223.4" width="23.5" height="2.4" fill="#b0b0b0" />
<rect x="4560.4" y="2223.4" width="2.4" height="23.5" fill="#b0b0b0" />
<path d="M4564.5,2233.0 L4570.0,2239.0 L4580.5,2228.0" fill="none" stroke="#000" stroke-width="6" stroke-linejoin="miter"/>
<text x="4603.0" y="2246.5" font-size="30" fill="#000" font-family="'Liberation Sans', sans-serif" textLength="241.0" lengthAdjust="spacingAndGlyphs" >マテリアル ID を生成</text>
<rect x="4611.0" y="2264.5" width="29.5" height="29.5" fill="#fff" />
<rect x="4611.0" y="2264.5" width="29.5" height="3.4" fill="#787878" />
<rect x="4611.0" y="2264.5" width="3.4" height="29.5" fill="#787878" />
<rect x="4611.0" y="2291.6" width="29.5" height="2.4" fill="#fdfdfd" />
<rect x="4638.1" y="2264.5" width="2.4" height="29.5" fill="#fdfdfd" />
<rect x="4614.4" y="2267.9" width="23.5" height="2.4" fill="#b0b0b0" />
<rect x="4614.4" y="2267.9" width="2.4" height="23.5" fill="#b0b0b0" />
<text x="4657.0" y="2291.0" font-size="30" fill="#000" font-family="'Liberation Sans', sans-serif" textLength="244.0" lengthAdjust="spacingAndGlyphs" >シェイプの ID を使用</text>
<rect x="4557.0" y="2306.0" width="29.5" height="29.5" fill="#fff" />
<rect x="4557.0" y="2306.0" width="29.5" height="3.4" fill="#787878" />
<rect x="4557.0" y="2306.0" width="3.4" height="29.5" fill="#787878" />
<rect x="4557.0" y="2333.1" width="29.5" height="2.4" fill="#fdfdfd" />
<rect x="4584.1" y="2306.0" width="2.4" height="29.5" fill="#fdfdfd" />
<rect x="4560.4" y="2309.4" width="23.5" height="2.4" fill="#b0b0b0" />
<rect x="4560.4" y="2309.4" width="2.4" height="23.5" fill="#b0b0b0" />
<path d="M4564.5,2319.0 L4570.0,2325.0 L4580.5,2314.0" fill="none" stroke="#000" stroke-width="6" stroke-linejoin="miter"/>
<text x="4603.0" y="2332.5" font-size="30" fill="#000" font-family="'Liberation Sans', sans-serif" textLength="98.0" lengthAdjust="spacingAndGlyphs" >スムーズ</text>
<rect x="138.0" y="2857.0" width="4384.5" height="46.5" fill="#bebebe" />
<rect x="138.0" y="2857.0" width="40.0" height="45.0" fill="#f0f0f0" />
<rect x="176.5" y="2857.0" width="2.0" height="45.0" fill="#c0c0c0" />
<text x="157.5" y="2889.0" font-size="30" fill="#222" font-family="'Liberation Sans', sans-serif" text-anchor="middle" >&lt;</text>
<rect x="179.5" y="2857.0" width="323.5" height="44.5" fill="url(#gThumb)" />
<rect x="181.0" y="2896.8" width="322.0" height="4.4" fill="#111" />
<rect x="499.0" y="2857.0" width="4.2" height="44.0" fill="#111" />
<rect x="179.5" y="2857.0" width="2.5" height="40.0" fill="#fff" />
<text x="338.0" y="2891.5" font-size="29" fill="#222" font-family="'Liberation Sans', sans-serif" text-anchor="middle" textLength="86.0" lengthAdjust="spacingAndGlyphs" >0 / 100</text>
<rect x="504.5" y="2857.0" width="38.0" height="45.0" fill="#f0f0f0" />
<text x="523.5" y="2889.0" font-size="30" fill="#222" font-family="'Liberation Sans', sans-serif" text-anchor="middle" >&gt;</text>
<rect x="138.0" y="2903.0" width="4384.5" height="3.0" fill="#fbfbfb" />
<rect x="138.0" y="2906.0" width="130.0" height="67.0" fill="#f0f0f0" />
<rect x="268.0" y="2906.0" width="4126.0" height="65.5" fill="url(#gTrack)" />
<rect x="4394.0" y="2906.0" width="128.5" height="65.5" fill="#f0f0f0" />
<rect x="273.0" y="2909.0" width="22.0" height="63.5" fill="#7d9cbf" stroke="#4a6a8e" stroke-width="2.2" />
<rect x="282.0" y="2907.0" width="2.6" height="64.0" fill="#6a6a6a" />
<rect x="322.9" y="2907.0" width="2.6" height="30.0" fill="#777" />
<rect x="322.9" y="2937.0" width="2.6" height="2.6" fill="#e8e8e8" />
<rect x="363.9" y="2907.0" width="2.6" height="30.0" fill="#777" />
<rect x="363.9" y="2937.0" width="2.6" height="2.6" fill="#e8e8e8" />
<rect x="404.9" y="2907.0" width="2.6" height="30.0" fill="#777" />
<rect x="404.9" y="2937.0" width="2.6" height="2.6" fill="#e8e8e8" />
<rect x="445.8" y="2907.0" width="2.6" height="30.0" fill="#777" />
<rect x="445.8" y="2937.0" width="2.6" height="2.6" fill="#e8e8e8" />
<rect x="486.8" y="2907.0" width="2.6" height="64.0" fill="#6a6a6a" />
<rect x="527.7" y="2907.0" width="2.6" height="30.0" fill="#777" />
<rect x="527.7" y="2937.0" width="2.6" height="2.6" fill="#e8e8e8" />
<rect x="568.7" y="2907.0" width="2.6" height="30.0" fill="#777" />
<rect x="568.7" y="2937.0" width="2.6" height="2.6" fill="#e8e8e8" />
<rect x="609.6" y="2907.0" width="2.6" height="30.0" fill="#777" />
<rect x="609.6" y="2937.0" width="2.6" height="2.6" fill="#e8e8e8" />
<rect x="650.6" y="2907.0" width="2.6" height="30.0" fill="#777" />
<rect x="650.6" y="2937.0" width="2.6" height="2.6" fill="#e8e8e8" />
<rect x="691.5" y="2907.0" width="2.6" height="64.0" fill="#6a6a6a" />
<rect x="732.5" y="2907.0" width="2.6" height="30.0" fill="#777" />
<rect x="732.5" y="2937.0" width="2.6" height="2.6" fill="#e8e8e8" />
<rect x="773.4" y="2907.0" width="2.6" height="30.0" fill="#777" />
<rect x="773.4" y="2937.0" width="2.6" height="2.6" fill="#e8e8e8" />
<rect x="814.4" y="2907.0" width="2.6" height="30.0" fill="#777" />
<rect x="814.4" y="2937.0" width="2.6" height="2.6" fill="#e8e8e8" />
<rect x="855.3" y="2907.0" width="2.6" height="30.0" fill="#777" />
<rect x="855.3" y="2937.0" width="2.6" height="2.6" fill="#e8e8e8" />
<rect x="896.2" y="2907.0" width="2.6" height="64.0" fill="#6a6a6a" />
<rect x="937.2" y="2907.0" width="2.6" height="30.0" fill="#777" />
<rect x="937.2" y="2937.0" width="2.6" height="2.6" fill="#e8e8e8" />
<rect x="978.2" y="2907.0" width="2.6" height="30.0" fill="#777" />
<rect x="978.2" y="2937.0" width="2.6" height="2.6" fill="#e8e8e8" />
<rect x="1019.1" y="2907.0" width="2.6" height="30.0" fill="#777" />
<rect x="1019.1" y="2937.0" width="2.6" height="2.6" fill="#e8e8e8" />
<rect x="1060.1" y="2907.0" width="2.6" height="30.0" fill="#777" />
<rect x="1060.1" y="2937.0" width="2.6" height="2.6" fill="#e8e8e8" />
<rect x="1101.0" y="2907.0" width="2.6" height="64.0" fill="#6a6a6a" />
<rect x="1142.0" y="2907.0" width="2.6" height="30.0" fill="#777" />
<rect x="1142.0" y="2937.0" width="2.6" height="2.6" fill="#e8e8e8" />
<rect x="1182.9" y="2907.0" width="2.6" height="30.0" fill="#777" />
<rect x="1182.9" y="2937.0" width="2.6" height="2.6" fill="#e8e8e8" />
<rect x="1223.9" y="2907.0" width="2.6" height="30.0" fill="#777" />
<rect x="1223.9" y="2937.0" width="2.6" height="2.6" fill="#e8e8e8" />
<rect x="1264.8" y="2907.0" width="2.6" height="30.0" fill="#777" />
<rect x="1264.8" y="2937.0" width="2.6" height="2.6" fill="#e8e8e8" />
<rect x="1305.8" y="2907.0" width="2.6" height="64.0" fill="#6a6a6a" />
<rect x="1346.7" y="2907.0" width="2.6" height="30.0" fill="#777" />
<rect x="1346.7" y="2937.0" width="2.6" height="2.6" fill="#e8e8e8" />
<rect x="1387.7" y="2907.0" width="2.6" height="30.0" fill="#777" />
<rect x="1387.7" y="2937.0" width="2.6" height="2.6" fill="#e8e8e8" />
<rect x="1428.6" y="2907.0" width="2.6" height="30.0" fill="#777" />
<rect x="1428.6" y="2937.0" width="2.6" height="2.6" fill="#e8e8e8" />
<rect x="1469.6" y="2907.0" width="2.6" height="30.0" fill="#777" />
<rect x="1469.6" y="2937.0" width="2.6" height="2.6" fill="#e8e8e8" />
<rect x="1510.5" y="2907.0" width="2.6" height="64.0" fill="#6a6a6a" />
<rect x="1551.5" y="2907.0" width="2.6" height="30.0" fill="#777" />
<rect x="1551.5" y="2937.0" width="2.6" height="2.6" fill="#e8e8e8" />
<rect x="1592.4" y="2907.0" width="2.6" height="30.0" fill="#777" />
<rect x="1592.4" y="2937.0" width="2.6" height="2.6" fill="#e8e8e8" />
<rect x="1633.4" y="2907.0" width="2.6" height="30.0" fill="#777" />
<rect x="1633.4" y="2937.0" width="2.6" height="2.6" fill="#e8e8e8" />
<rect x="1674.3" y="2907.0" width="2.6" height="30.0" fill="#777" />
<rect x="1674.3" y="2937.0" width="2.6" height="2.6" fill="#e8e8e8" />
<rect x="1715.2" y="2907.0" width="2.6" height="64.0" fill="#6a6a6a" />
<rect x="1756.2" y="2907.0" width="2.6" height="30.0" fill="#777" />
<rect x="1756.2" y="2937.0" width="2.6" height="2.6" fill="#e8e8e8" />
<rect x="1797.2" y="2907.0" width="2.6" height="30.0" fill="#777" />
<rect x="1797.2" y="2937.0" width="2.6" height="2.6" fill="#e8e8e8" />
<rect x="1838.1" y="2907.0" width="2.6" height="30.0" fill="#777" />
<rect x="1838.1" y="2937.0" width="2.6" height="2.6" fill="#e8e8e8" />
<rect x="1879.1" y="2907.0" width="2.6" height="30.0" fill="#777" />
<rect x="1879.1" y="2937.0" width="2.6" height="2.6" fill="#e8e8e8" />
<rect x="1920.0" y="2907.0" width="2.6" height="64.0" fill="#6a6a6a" />
<rect x="1961.0" y="2907.0" width="2.6" height="30.0" fill="#777" />
<rect x="1961.0" y="2937.0" width="2.6" height="2.6" fill="#e8e8e8" />
<rect x="2001.9" y="2907.0" width="2.6" height="30.0" fill="#777" />
<rect x="2001.9" y="2937.0" width="2.6" height="2.6" fill="#e8e8e8" />
<rect x="2042.9" y="2907.0" width="2.6" height="30.0" fill="#777" />
<rect x="2042.9" y="2937.0" width="2.6" height="2.6" fill="#e8e8e8" />
<rect x="2083.8" y="2907.0" width="2.6" height="30.0" fill="#777" />
<rect x="2083.8" y="2937.0" width="2.6" height="2.6" fill="#e8e8e8" />
<rect x="2124.8" y="2907.0" width="2.6" height="64.0" fill="#6a6a6a" />
<rect x="2165.7" y="2907.0" width="2.6" height="30.0" fill="#777" />
<rect x="2165.7" y="2937.0" width="2.6" height="2.6" fill="#e8e8e8" />
<rect x="2206.7" y="2907.0" width="2.6" height="30.0" fill="#777" />
<rect x="2206.7" y="2937.0" width="2.6" height="2.6" fill="#e8e8e8" />
<rect x="2247.6" y="2907.0" width="2.6" height="30.0" fill="#777" />
<rect x="2247.6" y="2937.0" width="2.6" height="2.6" fill="#e8e8e8" />
<rect x="2288.6" y="2907.0" width="2.6" height="30.0" fill="#777" />
<rect x="2288.6" y="2937.0" width="2.6" height="2.6" fill="#e8e8e8" />
<rect x="2329.5" y="2907.0" width="2.6" height="64.0" fill="#6a6a6a" />
<rect x="2370.5" y="2907.0" width="2.6" height="30.0" fill="#777" />
<rect x="2370.5" y="2937.0" width="2.6" height="2.6" fill="#e8e8e8" />
<rect x="2411.4" y="2907.0" width="2.6" height="30.0" fill="#777" />
<rect x="2411.4" y="2937.0" width="2.6" height="2.6" fill="#e8e8e8" />
<rect x="2452.4" y="2907.0" width="2.6" height="30.0" fill="#777" />
<rect x="2452.4" y="2937.0" width="2.6" height="2.6" fill="#e8e8e8" />
<rect x="2493.3" y="2907.0" width="2.6" height="30.0" fill="#777" />
<rect x="2493.3" y="2937.0" width="2.6" height="2.6" fill="#e8e8e8" />
<rect x="2534.2" y="2907.0" width="2.6" height="64.0" fill="#6a6a6a" />
<rect x="2575.2" y="2907.0" width="2.6" height="30.0" fill="#777" />
<rect x="2575.2" y="2937.0" width="2.6" height="2.6" fill="#e8e8e8" />
<rect x="2616.2" y="2907.0" width="2.6" height="30.0" fill="#777" />
<rect x="2616.2" y="2937.0" width="2.6" height="2.6" fill="#e8e8e8" />
<rect x="2657.1" y="2907.0" width="2.6" height="30.0" fill="#777" />
<rect x="2657.1" y="2937.0" width="2.6" height="2.6" fill="#e8e8e8" />
<rect x="2698.1" y="2907.0" width="2.6" height="30.0" fill="#777" />
<rect x="2698.1" y="2937.0" width="2.6" height="2.6" fill="#e8e8e8" />
<rect x="2739.0" y="2907.0" width="2.6" height="64.0" fill="#6a6a6a" />
<rect x="2780.0" y="2907.0" width="2.6" height="30.0" fill="#777" />
<rect x="2780.0" y="2937.0" width="2.6" height="2.6" fill="#e8e8e8" />
<rect x="2820.9" y="2907.0" width="2.6" height="30.0" fill="#777" />
<rect x="2820.9" y="2937.0" width="2.6" height="2.6" fill="#e8e8e8" />
<rect x="2861.9" y="2907.0" width="2.6" height="30.0" fill="#777" />
<rect x="2861.9" y="2937.0" width="2.6" height="2.6" fill="#e8e8e8" />
<rect x="2902.8" y="2907.0" width="2.6" height="30.0" fill="#777" />
<rect x="2902.8" y="2937.0" width="2.6" height="2.6" fill="#e8e8e8" />
<rect x="2943.8" y="2907.0" width="2.6" height="64.0" fill="#6a6a6a" />
<rect x="2984.7" y="2907.0" width="2.6" height="30.0" fill="#777" />
<rect x="2984.7" y="2937.0" width="2.6" height="2.6" fill="#e8e8e8" />
<rect x="3025.7" y="2907.0" width="2.6" height="30.0" fill="#777" />
<rect x="3025.7" y="2937.0" width="2.6" height="2.6" fill="#e8e8e8" />
<rect x="3066.6" y="2907.0" width="2.6" height="30.0" fill="#777" />
<rect x="3066.6" y="2937.0" width="2.6" height="2.6" fill="#e8e8e8" />
<rect x="3107.6" y="2907.0" width="2.6" height="30.0" fill="#777" />
<rect x="3107.6" y="2937.0" width="2.6" height="2.6" fill="#e8e8e8" />
<rect x="3148.5" y="2907.0" width="2.6" height="64.0" fill="#6a6a6a" />
<rect x="3189.5" y="2907.0" width="2.6" height="30.0" fill="#777" />
<rect x="3189.5" y="2937.0" width="2.6" height="2.6" fill="#e8e8e8" />
<rect x="3230.4" y="2907.0" width="2.6" height="30.0" fill="#777" />
<rect x="3230.4" y="2937.0" width="2.6" height="2.6" fill="#e8e8e8" />
<rect x="3271.4" y="2907.0" width="2.6" height="30.0" fill="#777" />
<rect x="3271.4" y="2937.0" width="2.6" height="2.6" fill="#e8e8e8" />
<rect x="3312.3" y="2907.0" width="2.6" height="30.0" fill="#777" />
<rect x="3312.3" y="2937.0" width="2.6" height="2.6" fill="#e8e8e8" />
<rect x="3353.2" y="2907.0" width="2.6" height="64.0" fill="#6a6a6a" />
<rect x="3394.2" y="2907.0" width="2.6" height="30.0" fill="#777" />
<rect x="3394.2" y="2937.0" width="2.6" height="2.6" fill="#e8e8e8" />
<rect x="3435.2" y="2907.0" width="2.6" height="30.0" fill="#777" />
<rect x="3435.2" y="2937.0" width="2.6" height="2.6" fill="#e8e8e8" />
<rect x="3476.1" y="2907.0" width="2.6" height="30.0" fill="#777" />
<rect x="3476.1" y="2937.0" width="2.6" height="2.6" fill="#e8e8e8" />
<rect x="3517.1" y="2907.0" width="2.6" height="30.0" fill="#777" />
<rect x="3517.1" y="2937.0" width="2.6" height="2.6" fill="#e8e8e8" />
<rect x="3558.0" y="2907.0" width="2.6" height="64.0" fill="#6a6a6a" />
<rect x="3599.0" y="2907.0" width="2.6" height="30.0" fill="#777" />
<rect x="3599.0" y="2937.0" width="2.6" height="2.6" fill="#e8e8e8" />
<rect x="3639.9" y="2907.0" width="2.6" height="30.0" fill="#777" />
<rect x="3639.9" y="2937.0" width="2.6" height="2.6" fill="#e8e8e8" />
<rect x="3680.9" y="2907.0" width="2.6" height="30.0" fill="#777" />
<rect x="3680.9" y="2937.0" width="2.6" height="2.6" fill="#e8e8e8" />
<rect x="3721.8" y="2907.0" width="2.6" height="30.0" fill="#777" />
<rect x="3721.8" y="2937.0" width="2.6" height="2.6" fill="#e8e8e8" />
<rect x="3762.8" y="2907.0" width="2.6" height="64.0" fill="#6a6a6a" />
<rect x="3803.7" y="2907.0" width="2.6" height="30.0" fill="#777" />
<rect x="3803.7" y="2937.0" width="2.6" height="2.6" fill="#e8e8e8" />
<rect x="3844.7" y="2907.0" width="2.6" height="30.0" fill="#777" />
<rect x="3844.7" y="2937.0" width="2.6" height="2.6" fill="#e8e8e8" />
<rect x="3885.6" y="2907.0" width="2.6" height="30.0" fill="#777" />
<rect x="3885.6" y="2937.0" width="2.6" height="2.6" fill="#e8e8e8" />
<rect x="3926.6" y="2907.0" width="2.6" height="30.0" fill="#777" />
<rect x="3926.6" y="2937.0" width="2.6" height="2.6" fill="#e8e8e8" />
<rect x="3967.5" y="2907.0" width="2.6" height="64.0" fill="#6a6a6a" />
<rect x="4008.5" y="2907.0" width="2.6" height="30.0" fill="#777" />
<rect x="4008.5" y="2937.0" width="2.6" height="2.6" fill="#e8e8e8" />
<rect x="4049.4" y="2907.0" width="2.6" height="30.0" fill="#777" />
<rect x="4049.4" y="2937.0" width="2.6" height="2.6" fill="#e8e8e8" />
<rect x="4090.4" y="2907.0" width="2.6" height="30.0" fill="#777" />
<rect x="4090.4" y="2937.0" width="2.6" height="2.6" fill="#e8e8e8" />
<rect x="4131.3" y="2907.0" width="2.6" height="30.0" fill="#777" />
<rect x="4131.3" y="2937.0" width="2.6" height="2.6" fill="#e8e8e8" />
<rect x="4172.2" y="2907.0" width="2.6" height="64.0" fill="#6a6a6a" />
<rect x="4213.2" y="2907.0" width="2.6" height="30.0" fill="#777" />
<rect x="4213.2" y="2937.0" width="2.6" height="2.6" fill="#e8e8e8" />
<rect x="4254.1" y="2907.0" width="2.6" height="30.0" fill="#777" />
<rect x="4254.1" y="2937.0" width="2.6" height="2.6" fill="#e8e8e8" />
<rect x="4295.1" y="2907.0" width="2.6" height="30.0" fill="#777" />
<rect x="4295.1" y="2937.0" width="2.6" height="2.6" fill="#e8e8e8" />
<rect x="4336.1" y="2907.0" width="2.6" height="30.0" fill="#777" />
<rect x="4336.1" y="2937.0" width="2.6" height="2.6" fill="#e8e8e8" />
<rect x="4377.0" y="2907.0" width="2.6" height="64.0" fill="#6a6a6a" />
<text x="282.3" y="2966.0" font-size="28" fill="#333" font-family="'Liberation Sans', sans-serif" text-anchor="middle" >0</text>
<text x="489.1" y="2966.0" font-size="28" fill="#222" font-family="'Liberation Sans', sans-serif" text-anchor="middle" paint-order="stroke" stroke="#c6c6c6" stroke-width="3">5</text>
<text x="693.8" y="2966.0" font-size="28" fill="#222" font-family="'Liberation Sans', sans-serif" text-anchor="middle" paint-order="stroke" stroke="#c6c6c6" stroke-width="3">10</text>
<text x="898.5" y="2966.0" font-size="28" fill="#222" font-family="'Liberation Sans', sans-serif" text-anchor="middle" paint-order="stroke" stroke="#c6c6c6" stroke-width="3">15</text>
<text x="1103.3" y="2966.0" font-size="28" fill="#222" font-family="'Liberation Sans', sans-serif" text-anchor="middle" paint-order="stroke" stroke="#c6c6c6" stroke-width="3">20</text>
<text x="1308.1" y="2966.0" font-size="28" fill="#222" font-family="'Liberation Sans', sans-serif" text-anchor="middle" paint-order="stroke" stroke="#c6c6c6" stroke-width="3">25</text>
<text x="1512.8" y="2966.0" font-size="28" fill="#222" font-family="'Liberation Sans', sans-serif" text-anchor="middle" paint-order="stroke" stroke="#c6c6c6" stroke-width="3">30</text>
<text x="1717.5" y="2966.0" font-size="28" fill="#222" font-family="'Liberation Sans', sans-serif" text-anchor="middle" paint-order="stroke" stroke="#c6c6c6" stroke-width="3">35</text>
<text x="1922.3" y="2966.0" font-size="28" fill="#222" font-family="'Liberation Sans', sans-serif" text-anchor="middle" paint-order="stroke" stroke="#c6c6c6" stroke-width="3">40</text>
<text x="2127.1" y="2966.0" font-size="28" fill="#222" font-family="'Liberation Sans', sans-serif" text-anchor="middle" paint-order="stroke" stroke="#c6c6c6" stroke-width="3">45</text>
<text x="2331.8" y="2966.0" font-size="28" fill="#222" font-family="'Liberation Sans', sans-serif" text-anchor="middle" paint-order="stroke" stroke="#c6c6c6" stroke-width="3">50</text>
<text x="2536.6" y="2966.0" font-size="28" fill="#222" font-family="'Liberation Sans', sans-serif" text-anchor="middle" paint-order="stroke" stroke="#c6c6c6" stroke-width="3">55</text>
<text x="2741.3" y="2966.0" font-size="28" fill="#222" font-family="'Liberation Sans', sans-serif" text-anchor="middle" paint-order="stroke" stroke="#c6c6c6" stroke-width="3">60</text>
<text x="2946.1" y="2966.0" font-size="28" fill="#222" font-family="'Liberation Sans', sans-serif" text-anchor="middle" paint-order="stroke" stroke="#c6c6c6" stroke-width="3">65</text>
<text x="3150.8" y="2966.0" font-size="28" fill="#222" font-family="'Liberation Sans', sans-serif" text-anchor="middle" paint-order="stroke" stroke="#c6c6c6" stroke-width="3">70</text>
<text x="3355.6" y="2966.0" font-size="28" fill="#222" font-family="'Liberation Sans', sans-serif" text-anchor="middle" paint-order="stroke" stroke="#c6c6c6" stroke-width="3">75</text>
<text x="3560.3" y="2966.0" font-size="28" fill="#222" font-family="'Liberation Sans', sans-serif" text-anchor="middle" paint-order="stroke" stroke="#c6c6c6" stroke-width="3">80</text>
<text x="3765.1" y="2966.0" font-size="28" fill="#222" font-family="'Liberation Sans', sans-serif" text-anchor="middle" paint-order="stroke" stroke="#c6c6c6" stroke-width="3">85</text>
<text x="3969.8" y="2966.0" font-size="28" fill="#222" font-family="'Liberation Sans', sans-serif" text-anchor="middle" paint-order="stroke" stroke="#c6c6c6" stroke-width="3">90</text>
<text x="4174.6" y="2966.0" font-size="28" fill="#222" font-family="'Liberation Sans', sans-serif" text-anchor="middle" paint-order="stroke" stroke="#c6c6c6" stroke-width="3">95</text>
<text x="4379.3" y="2966.0" font-size="28" fill="#222" font-family="'Liberation Sans', sans-serif" text-anchor="middle" paint-order="stroke" stroke="#c6c6c6" stroke-width="3">100</text>
<rect x="172.0" y="2919.0" width="43.5" height="13.5" fill="#fff" stroke="#111" stroke-width="3.4" />
<path d="M178,2927 Q184,2921 190,2926 T202,2926 L210,2926" fill="none" stroke="#111" stroke-width="2" />
<rect x="172.0" y="2950.0" width="43.5" height="9.5" fill="#fff" stroke="#111" stroke-width="3.2" />
<rect x="183.0" y="2952.0" width="2.0" height="6.0" fill="#111" />
<rect x="194.0" y="2952.0" width="2.0" height="6.0" fill="#111" />
<rect x="205.0" y="2952.0" width="2.0" height="6.0" fill="#111" />
<line x1="182.5" y1="2936.0" x2="182.5" y2="2948.0" stroke="#111" stroke-width="2.4" />
<path d="M177.5,2941 L182.5,2935.5 L187.5,2941" fill="none" stroke="#111" stroke-width="2.4" />
<line x1="205.0" y1="2934.0" x2="205.0" y2="2946.0" stroke="#111" stroke-width="2.4" />
<path d="M200,2941 L205,2946.5 L210,2941" fill="none" stroke="#111" stroke-width="2.4" />
<rect x="45.0" y="2858.5" width="92.5" height="107.0" fill="url(#gBlue)" stroke="#6c7c88" stroke-width="2.6" rx="5"/>
<rect x="54.0" y="2874.0" width="77.0" height="70.0" fill="url(#gInner)" stroke="#70808c" stroke-width="2.6" />
<rect x="4532.0" y="2955.8" width="450.0" height="2.8" fill="#fdfdfd" />
<rect x="4979.5" y="1566.0" width="2.8" height="1392.0" fill="#fbfbfb" />
<rect x="4982.3" y="1566.0" width="13.7" height="1405.0" fill="#f3f3f3" />
<rect x="4527.0" y="2971.3" width="469.0" height="2.6" fill="#a2a2a2" />
<rect x="35.0" y="2973.0" width="4961.0" height="126.0" fill="#f0f0f0" />
<rect x="40.0" y="2980.5" width="246.0" height="53.0" fill="#dcc5c5" />
<rect x="40.0" y="2980.5" width="246.0" height="4.0" fill="#7a7272" />
<rect x="40.0" y="2980.5" width="4.0" height="53.0" fill="#7a7272" />
<rect x="40.0" y="3029.5" width="246.0" height="4.0" fill="#fdfdfd" />
<rect x="282.0" y="2980.5" width="4.0" height="53.0" fill="#fdfdfd" />
<rect x="40.0" y="3041.0" width="246.0" height="53.0" fill="#fff" />
<rect x="40.0" y="3041.0" width="246.0" height="4.0" fill="#7a7a7a" />
<rect x="40.0" y="3041.0" width="4.0" height="53.0" fill="#7a7a7a" />
<rect x="40.0" y="3090.0" width="246.0" height="4.0" fill="#e4e4e4" />
<rect x="282.0" y="3041.0" width="4.0" height="53.0" fill="#e4e4e4" />
<text x="55.0" y="3078.0" font-size="29" fill="#111" font-family="'Liberation Sans', sans-serif" textLength="221.0" lengthAdjust="spacingAndGlyphs" >MAXScript によう</text>
<rect x="303.5" y="2976.0" width="2.0" height="122.0" fill="#fdfdfd" />
<rect x="305.5" y="2976.0" width="2.0" height="122.0" fill="#b0b0b0" />
<rect x="312.5" y="2984.5" width="2325.0" height="53.0" fill="#f2f2f2" />
<rect x="312.5" y="2984.5" width="2325.0" height="2.4" fill="#b8b8b8" />
<rect x="312.5" y="2984.5" width="2.4" height="53.0" fill="#b8b8b8" />
<rect x="312.5" y="3035.0" width="2325.0" height="2.5" fill="#fff" />
<rect x="2635.0" y="2984.5" width="2.5" height="53.0" fill="#fff" />
<text x="328.0" y="3022.0" font-size="30" fill="#000" font-family="'Liberation Sans', sans-serif" textLength="415.0" lengthAdjust="spacingAndGlyphs" >1 個のオブジェクトが選択されました</text>
<rect x="312.5" y="3047.0" width="3487.0" height="3.0" fill="#a8a8a8" />
<rect x="312.5" y="3050.0" width="3160.0" height="49.0" fill="#f2f2f2" />
<rect x="312.5" y="3050.0" width="2.4" height="49.0" fill="#b8b8b8" />
<text x="326.0" y="3087.5" font-size="30" fill="#000" font-family="'Liberation Sans', sans-serif" textLength="646.0" lengthAdjust="spacingAndGlyphs" >クリックとドラッグをして、オブジェクトを選択し移動します</text>
<ellipse cx="2675" cy="3003" rx="13" ry="15.5" fill="#d07880" stroke="#6a3a40" stroke-width="2.4"/>
<ellipse cx="2671" cy="2998" rx="4.5" ry="6" fill="#f0b4b8"/>
<path d="M2668,3017 L2670,3030 M2682,3017 L2680,3030" fill="none" stroke="#5a4a4a" stroke-width="3" />
<path d="M2733,3006 L2733,2998 Q2733,2988 2742,2988 Q2751,2988 2751,2998 L2751,3006" fill="none" stroke="#777" stroke-width="4" />
<rect x="2727.0" y="3005.0" width="30.0" height="23.0" fill="#e4dcb4" stroke="#6a6448" stroke-width="2.4" />
<rect x="2740.5" y="3011.0" width="3.0" height="10.0" fill="#6a6448" />
<rect x="2794.0" y="2992.0" width="37.0" height="37.0" fill="#f8f8f8" stroke="#333" stroke-width="2.8" />
<circle cx="2812.5" cy="3010.5" r="8.5" fill="#fff" stroke="#333" stroke-width="2.6"/>
<line x1="2812.5" y1="2992.0" x2="2812.5" y2="3002.0" stroke="#333" stroke-width="2.4" />
<line x1="2812.5" y1="3019.0" x2="2812.5" y2="3029.0" stroke="#333" stroke-width="2.4" />
<line x1="2794.0" y1="3010.5" x2="2804.0" y2="3010.5" stroke="#333" stroke-width="2.4" />
<line x1="2821.0" y1="3010.5" x2="2831.0" y2="3010.5" stroke="#333" stroke-width="2.4" />
<text x="2855.0" y="3022.0" font-size="28" fill="#222" font-family="'Liberation Sans', sans-serif" textLength="25.0" lengthAdjust="spacingAndGlyphs" >X:</text>
<rect x="2901.0" y="2986.0" width="143.5" height="50.0" fill="#fff" />
<rect x="2901.0" y="2986.0" width="143.5" height="3.4" fill="#1a1a1a" />
<rect x="2901.0" y="2986.0" width="3.4" height="50.0" fill="#1a1a1a" />
<rect x="2901.0" y="3032.6" width="143.5" height="3.4" fill="#fdfdfd" />
<rect x="3041.1" y="2986.0" width="3.4" height="50.0" fill="#fdfdfd" />
<text x="2910.0" y="3022.0" font-size="28" fill="#222" font-family="'Liberation Sans', sans-serif" textLength="38.0" lengthAdjust="spacingAndGlyphs" >0.0</text>
<rect x="3051.0" y="2992.0" width="26.0" height="38.0" fill="#f0f0f0" />
<rect x="3051.0" y="2992.0" width="26.0" height="2.0" fill="#fdfdfd" />
<rect x="3051.0" y="2992.0" width="2.0" height="38.0" fill="#fdfdfd" />
<rect x="3051.0" y="3028.0" width="26.0" height="2.0" fill="#b4b4b4" />
<rect x="3075.0" y="2992.0" width="2.0" height="38.0" fill="#b4b4b4" />
<path d="M3058.0,3006.0 L3070.0,3006.0 L3064.0,2999.0 Z" fill="#000" />
<path d="M3058.0,3015.0 L3070.0,3015.0 L3064.0,3022.0 Z" fill="#000" />
<text x="3085.0" y="3022.0" font-size="28" fill="#222" font-family="'Liberation Sans', sans-serif" textLength="25.0" lengthAdjust="spacingAndGlyphs" >Y:</text>
<rect x="3131.0" y="2986.0" width="143.5" height="50.0" fill="#fff" />
<rect x="3131.0" y="2986.0" width="143.5" height="3.4" fill="#1a1a1a" />
<rect x="3131.0" y="2986.0" width="3.4" height="50.0" fill="#1a1a1a" />
<rect x="3131.0" y="3032.6" width="143.5" height="3.4" fill="#fdfdfd" />
<rect x="3271.1" y="2986.0" width="3.4" height="50.0" fill="#fdfdfd" />
<text x="3140.0" y="3022.0" font-size="28" fill="#222" font-family="'Liberation Sans', sans-serif" textLength="38.0" lengthAdjust="spacingAndGlyphs" >0.0</text>
<rect x="3281.0" y="2992.0" width="26.0" height="38.0" fill="#f0f0f0" />
<rect x="3281.0" y="2992.0" width="26.0" height="2.0" fill="#fdfdfd" />
<rect x="3281.0" y="2992.0" width="2.0" height="38.0" fill="#fdfdfd" />
<rect x="3281.0" y="3028.0" width="26.0" height="2.0" fill="#b4b4b4" />
<rect x="3305.0" y="2992.0" width="2.0" height="38.0" fill="#b4b4b4" />
<path d="M3288.0,3006.0 L3300.0,3006.0 L3294.0,2999.0 Z" fill="#000" />
<path d="M3288.0,3015.0 L3300.0,3015.0 L3294.0,3022.0 Z" fill="#000" />
<text x="3314.0" y="3022.0" font-size="28" fill="#222" font-family="'Liberation Sans', sans-serif" textLength="25.0" lengthAdjust="spacingAndGlyphs" >Z:</text>
<rect x="3361.0" y="2986.0" width="143.5" height="50.0" fill="#fff" />
<rect x="3361.0" y="2986.0" width="143.5" height="3.4" fill="#1a1a1a" />
<rect x="3361.0" y="2986.0" width="3.4" height="50.0" fill="#1a1a1a" />
<rect x="3361.0" y="3032.6" width="143.5" height="3.4" fill="#fdfdfd" />
<rect x="3501.1" y="2986.0" width="3.4" height="50.0" fill="#fdfdfd" />
<text x="3370.0" y="3022.0" font-size="28" fill="#222" font-family="'Liberation Sans', sans-serif" textLength="38.0" lengthAdjust="spacingAndGlyphs" >0.0</text>
<rect x="3511.0" y="2992.0" width="26.0" height="38.0" fill="#f0f0f0" />
<rect x="3511.0" y="2992.0" width="26.0" height="2.0" fill="#fdfdfd" />
<rect x="3511.0" y="2992.0" width="2.0" height="38.0" fill="#fdfdfd" />
<rect x="3511.0" y="3028.0" width="26.0" height="2.0" fill="#b4b4b4" />
<rect x="3535.0" y="2992.0" width="2.0" height="38.0" fill="#b4b4b4" />
<path d="M3518.0,3006.0 L3530.0,3006.0 L3524.0,2999.0 Z" fill="#000" />
<path d="M3518.0,3015.0 L3530.0,3015.0 L3524.0,3022.0 Z" fill="#000" />
<rect x="3543.0" y="2984.5" width="2.0" height="114.0" fill="#fdfdfd" />
<rect x="3545.0" y="2984.5" width="2.0" height="114.0" fill="#b0b0b0" />
<rect x="3548.0" y="2984.5" width="252.0" height="53.0" fill="#f2f2f2" />
<text x="3560.0" y="3022.0" font-size="29" fill="#111" font-family="'Liberation Sans', sans-serif" textLength="191.0" lengthAdjust="spacingAndGlyphs" >グリッド = 100.0</text>
<rect x="3483.0" y="3050.0" width="52.5" height="49.0" fill="#e8c868" stroke="#9a9a9a" stroke-width="2" />
<path d="M3496,3066 L3503,3059 L3525,3059 L3525,3083 L3518,3090 L3496,3090 Z" fill="#fff" stroke="#333" stroke-width="2.4" />
<path d="M3496,3066 L3518,3066 L3518,3090 M3518,3066 L3525,3059" fill="none" stroke="#333" stroke-width="2" />
<rect x="3548.0" y="3050.0" width="252.0" height="49.0" fill="#f2f2f2" />
<text x="3560.0" y="3088.0" font-size="30" fill="#000" font-family="'Liberation Sans', sans-serif" textLength="188.0" lengthAdjust="spacingAndGlyphs" >時間タグを追加</text>
<rect x="3800.0" y="2984.5" width="2.4" height="114.0" fill="#fdfdfd" />
<rect x="3814.0" y="2983.0" width="110.5" height="110.5" fill="#f0f0f0" />
<rect x="3814.0" y="2983.0" width="110.5" height="2.6" fill="#fdfdfd" />
<rect x="3814.0" y="2983.0" width="2.6" height="110.5" fill="#fdfdfd" />
<rect x="3814.0" y="3090.9" width="110.5" height="2.6" fill="#a8a8a8" />
<rect x="3921.9" y="2983.0" width="2.6" height="110.5" fill="#a8a8a8" />
<circle cx="3851" cy="3036" r="10.5" fill="none" stroke="#000" stroke-width="4.6"/>
<rect x="3861.0" y="3033.5" width="39.0" height="5.0" fill="#000" />
<rect x="3882.0" y="3036.0" width="5.0" height="11.0" fill="#000" />
<rect x="3892.0" y="3036.0" width="5.0" height="9.0" fill="#000" />
<rect x="3936.0" y="2983.0" width="163.0" height="54.5" fill="#f0f0f0" />
<rect x="3936.0" y="2983.0" width="163.0" height="2.6" fill="#fdfdfd" />
<rect x="3936.0" y="2983.0" width="2.6" height="54.5" fill="#fdfdfd" />
<rect x="3936.0" y="3034.9" width="163.0" height="2.6" fill="#a8a8a8" />
<rect x="4096.4" y="2983.0" width="2.6" height="54.5" fill="#a8a8a8" />
<text x="4017.5" y="3021.5" font-size="30" fill="#000" font-family="'Liberation Sans', sans-serif" text-anchor="middle" textLength="129.0" lengthAdjust="spacingAndGlyphs" >オート キー</text>
<rect x="3936.0" y="3040.0" width="163.0" height="54.0" fill="#f0f0f0" />
<rect x="3936.0" y="3040.0" width="163.0" height="2.6" fill="#fdfdfd" />
<rect x="3936.0" y="3040.0" width="2.6" height="54.0" fill="#fdfdfd" />
<rect x="3936.0" y="3091.4" width="163.0" height="2.6" fill="#a8a8a8" />
<rect x="4096.4" y="3040.0" width="2.6" height="54.0" fill="#a8a8a8" />
<text x="4017.5" y="3078.5" font-size="30" fill="#000" font-family="'Liberation Sans', sans-serif" text-anchor="middle" textLength="122.0" lengthAdjust="spacingAndGlyphs" >セット キー</text>
<rect x="4111.0" y="2984.5" width="293.0" height="48.0" fill="url(#gDrop)" />
<rect x="4111.0" y="2984.5" width="293.0" height="4.0" fill="#7c7c7c" />
<rect x="4111.0" y="2984.5" width="4.0" height="48.0" fill="#7c7c7c" />
<rect x="4111.0" y="3029.5" width="293.0" height="3.0" fill="#fff" />
<rect x="4401.0" y="2984.5" width="3.0" height="48.0" fill="#fff" />
<path d="M4375.0,3002.5 L4393.0,3002.5 L4384.0,3011.5 Z" fill="#000" />
<text x="4119.0" y="3021.5" font-size="30" fill="#000" font-family="'Liberation Sans', sans-serif" textLength="60.0" lengthAdjust="spacingAndGlyphs" >選択</text>
<path d="M4119,3066 L4131,3086 L4146,3053 L4156,3068" fill="none" stroke="#c8283c" stroke-width="3.4" />
<line x1="4118.0" y1="3086.5" x2="4142.0" y2="3086.5" stroke="#555" stroke-width="2.4" />
<line x1="4138.0" y1="3052.5" x2="4157.0" y2="3052.5" stroke="#555" stroke-width="2.4" />
<path d="M4163.5,3088.0 L4163.5,3093.5 L4158.0,3093.5 Z" fill="#000" />
<rect x="4179.0" y="3041.0" width="228.0" height="52.5" fill="#f0f0f0" />
<rect x="4179.0" y="3041.0" width="228.0" height="2.6" fill="#fdfdfd" />
<rect x="4179.0" y="3041.0" width="2.6" height="52.5" fill="#fdfdfd" />
<rect x="4179.0" y="3090.9" width="228.0" height="2.6" fill="#a8a8a8" />
<rect x="4404.4" y="3041.0" width="2.6" height="52.5" fill="#a8a8a8" />
<text x="4293.0" y="3078.5" font-size="30" fill="#000" font-family="'Liberation Sans', sans-serif" text-anchor="middle" textLength="173.0" lengthAdjust="spacingAndGlyphs" >キー フィルタ...</text>
<rect x="4434.0" y="2992.0" width="5.0" height="32.0" fill="#222" />
<path d="M4456.0,2997.0 L4439.0,3008.0 L4456.0,3019.0 Z" fill="#222" />
<path d="M4472.0,2997.0 L4455.0,3008.0 L4472.0,3019.0 Z" fill="#222" />
<rect x="4472.0" y="2996.0" width="4.0" height="24.0" fill="#222" />
<rect x="4488.0" y="2988.0" width="2.0" height="42.0" fill="#c4c4c4" />
<path d="M4523.0,2997.0 L4501.0,3008.0 L4523.0,3019.0 Z" fill="#222" />
<rect x="4524.0" y="2997.0" width="4.5" height="22.0" fill="#222" />
<rect x="4531.0" y="2997.0" width="4.5" height="22.0" fill="#222" />
<rect x="4538.0" y="2997.0" width="4.5" height="22.0" fill="#222" />
<path d="M4568.0,2993.0 L4595.0,3008.0 L4568.0,3023.0 Z" fill="#333" />
<path d="M4606.5,3020.0 L4606.5,3025.5 L4601.0,3025.5 Z" fill="#000" />
<rect x="4621.0" y="2997.0" width="4.5" height="22.0" fill="#222" />
<rect x="4628.0" y="2997.0" width="4.5" height="22.0" fill="#222" />
<rect x="4635.0" y="2997.0" width="4.5" height="22.0" fill="#222" />
<path d="M4641.0,2997.0 L4663.0,3008.0 L4641.0,3019.0 Z" fill="#222" />
<rect x="4676.0" y="2988.0" width="2.0" height="42.0" fill="#c4c4c4" />
<rect x="4688.0" y="2996.0" width="4.0" height="24.0" fill="#222" />
<path d="M4692.0,2997.0 L4709.0,3008.0 L4692.0,3019.0 Z" fill="#222" />
<path d="M4708.0,2997.0 L4725.0,3008.0 L4708.0,3019.0 Z" fill="#222" />
<rect x="4725.0" y="2992.0" width="5.0" height="32.0" fill="#222" />
<rect x="4750.0" y="2988.0" width="2.0" height="42.0" fill="#c4c4c4" />
<rect x="4434.0" y="3056.0" width="4.0" height="24.0" fill="#222" />
<path d="M4453.0,3059.0 L4439.0,3068.0 L4453.0,3077.0 Z" fill="#222" />
<path d="M4456.0,3059.0 L4470.0,3068.0 L4456.0,3077.0 Z" fill="#222" />
<rect x="4472.0" y="3056.0" width="4.0" height="24.0" fill="#222" />
<rect x="4497.5" y="3043.0" width="159.0" height="50.0" fill="#fff" />
<rect x="4497.5" y="3043.0" width="159.0" height="3.4" fill="#1a1a1a" />
<rect x="4497.5" y="3043.0" width="3.4" height="50.0" fill="#1a1a1a" />
<rect x="4497.5" y="3089.6" width="159.0" height="3.4" fill="#fdfdfd" />
<rect x="4653.1" y="3043.0" width="3.4" height="50.0" fill="#fdfdfd" />
<text x="4506.0" y="3078.0" font-size="28" fill="#222" font-family="'Liberation Sans', sans-serif" >0</text>
<path d="M4668,3062 L4682,3062 L4675,3054 Z" fill="#000" />
<path d="M4668,3073 L4682,3073 L4675,3081 Z" fill="#000" />
<rect x="4692.0" y="3046.0" width="2.0" height="46.0" fill="#999" />
<rect x="4697.0" y="3046.0" width="2.0" height="46.0" fill="#999" />
<rect x="4709.0" y="3048.0" width="30.0" height="36.0" fill="#dce4ec" stroke="#333" stroke-width="2.6" />
<rect x="4714.0" y="3053.0" width="18.0" height="10.0" fill="#2c4c7c" />
<circle cx="4737" cy="3078" r="11" fill="#f4f4f4" stroke="#333" stroke-width="2.4"/>
<path d="M4737,3070 L4737,3078 L4743,3078" fill="none" stroke="#333" stroke-width="2.2" />
<circle cx="4718" cy="3076" r="3" fill="none" stroke="#333" stroke-width="1.6"/>
<circle cx="4779" cy="3005" r="10" fill="none" stroke="#333" stroke-width="2.8"/>
<line x1="4786.0" y1="3012.0" x2="4795.0" y2="3021.0" stroke="#333" stroke-width="4.2" />
<path d="M4797,2988 L4797,3000 M4791,2994 L4803,2994" fill="none" stroke="#333" stroke-width="2.4" />
<rect x="4824.0" y="2992.0" width="32.0" height="27.0" fill="none" stroke="#333" stroke-width="2.6" />
<line x1="4840.0" y1="2992.0" x2="4840.0" y2="3019.0" stroke="#333" stroke-width="2.2" />
<line x1="4824.0" y1="3005.0" x2="4856.0" y2="3005.0" stroke="#333" stroke-width="2.2" />
<circle cx="4853" cy="3016" r="6.5" fill="none" stroke="#333" stroke-width="2.8"/>
<line x1="4857.6" y1="3020.6" x2="4866.6" y2="3029.6" stroke="#333" stroke-width="4.2" />
<path d="M4885,3000 L4885,2991 L4894,2991 M4916,2991 L4925,2991 L4925,3000 M4925,3022 L4925,3031 L4916,3031 M4894,3031 L4885,3031 L4885,3022" fill="none" stroke="#333" stroke-width="2.6" />
<path d="M4893,3004 L4899,2998 L4917,2998 L4917,3017 L4911,3023 L4893,3023 Z" fill="#8cac7c" stroke="#333" stroke-width="2.4" />
<path d="M4893,3004 L4911,3004 L4911,3023 M4911,3004 L4917,2998" fill="none" stroke="#333" stroke-width="2" />
<path d="M4932.5,3027.0 L4932.5,3032.5 L4927.0,3032.5 Z" fill="#000" />
<rect x="4957.0" y="2990.0" width="26.0" height="22.0" fill="none" stroke="#333" stroke-width="2.4" />
<line x1="4970.0" y1="2990.0" x2="4970.0" y2="3012.0" stroke="#333" stroke-width="2" />
<line x1="4957.0" y1="3001.0" x2="4983.0" y2="3001.0" stroke="#333" stroke-width="2" />
<path d="M4943,3012 L4949,3006 L4965,3006 L4965,3023 L4959,3029 L4943,3029 Z" fill="#8cac7c" stroke="#333" stroke-width="2.4" />
<path d="M4943,3012 L4959,3012 L4959,3029 M4959,3012 L4965,3006" fill="none" stroke="#333" stroke-width="2" />
<path d="M4992.5,3027.0 L4992.5,3032.5 L4987.0,3032.5 Z" fill="#000" />
<rect x="4765.0" y="3049.0" width="24.0" height="22.0" fill="none" stroke="#333" stroke-width="2.4" stroke-dasharray="6,4"/>
<circle cx="4789" cy="3075" r="7.5" fill="none" stroke="#333" stroke-width="2.8"/>
<line x1="4794.2" y1="3080.2" x2="4803.2" y2="3089.2" stroke="#333" stroke-width="4.2" />
<path d="M4830,3078 L4826,3066 Q4830,3062 4833,3068 L4834,3054 Q4838,3050 4840,3055 L4842,3050 Q4846,3047 4848,3052 L4850,3051 Q4854,3050 4855,3055 L4857,3058 Q4861,3058 4861,3064 L4858,3082 Q4852,3092 4840,3090 Z" fill="#f4f4f4" stroke="#333" stroke-width="2.2" />
<path d="M4871.5,3087.0 L4871.5,3092.5 L4866.0,3092.5 Z" fill="#000" />
<circle cx="4905" cy="3074" r="12" fill="none" stroke="#333" stroke-width="2.4"/>
<path d="M4905,3052 L4905,3074 L4920,3084" fill="none" stroke="#333" stroke-width="2.6" />
<path d="M4905,3062 A12,12 0 0 1 4916,3078 L4905,3074 Z" fill="#7cac6c" />
<path d="M4899,3054 L4905,3047 L4911,3054" fill="none" stroke="#333" stroke-width="2.2" />
<path d="M4888.5,3087.0 L4888.5,3092.5 L4883.0,3092.5 Z" fill="#000" />
<path d="M4931.5,3087.0 L4931.5,3092.5 L4926.0,3092.5 Z" fill="#000" />
<rect x="4943.0" y="3050.0" width="28.0" height="26.0" fill="#f4f4f4" stroke="#333" stroke-width="2.6" />
<rect x="4962.0" y="3070.0" width="22.0" height="18.0" fill="#f0f0f0" stroke="#333" stroke-width="2.2" />
<path d="M4949,3056 L4963,3070 M4949,3056 L4949,3064 M4949,3056 L4957,3056" fill="none" stroke="#111" stroke-width="2.6" />
</svg>
</body></html>
